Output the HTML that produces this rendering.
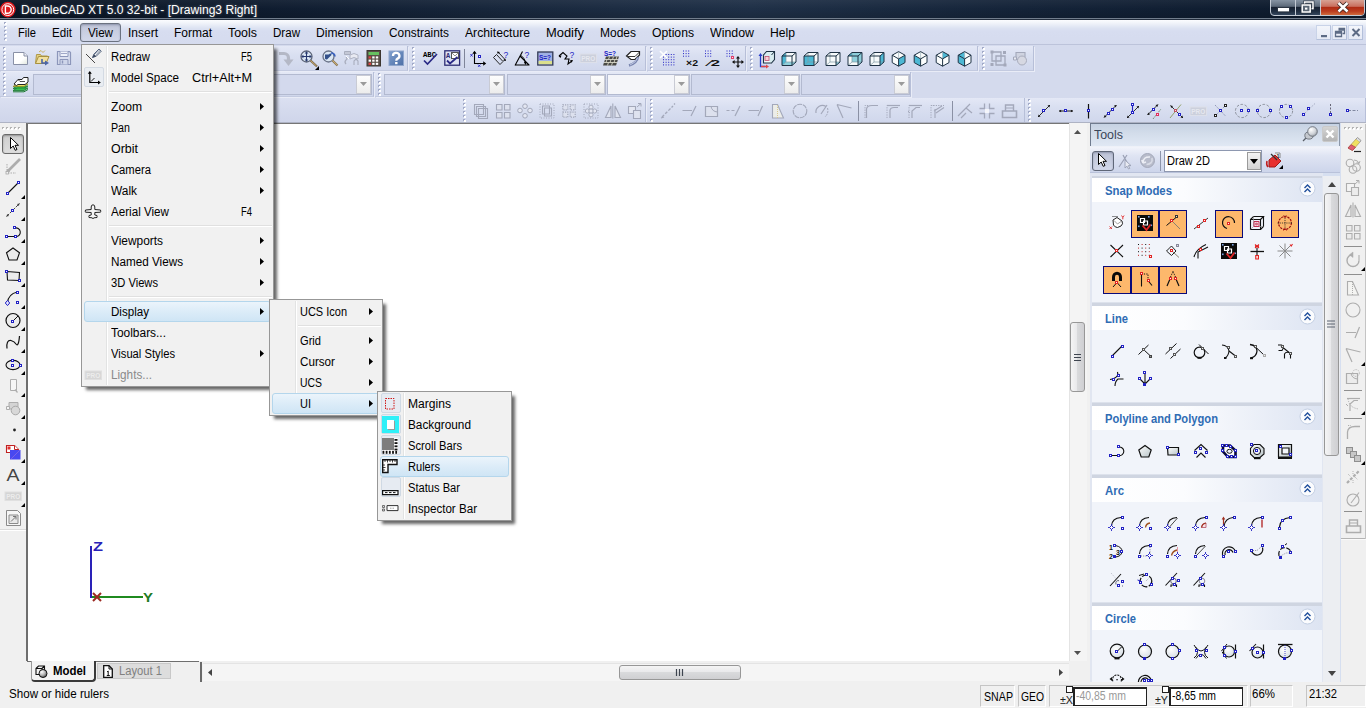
<!DOCTYPE html>
<html><head><meta charset="utf-8"><title>DoubleCAD XT 5.0 32-bit - [Drawing3 Right]</title>
<style>
html,body{margin:0;padding:0;}
body{width:1366px;height:708px;overflow:hidden;position:relative;background:#d4daed;font-family:"Liberation Sans",sans-serif;font-size:12px;}
div,span,svg{position:absolute;box-sizing:border-box;}
span{white-space:pre;transform-origin:0 50%;}
svg{overflow:visible;}
</style></head>
<body>
<div style="left:0px;top:0px;width:1366px;height:20px;background:linear-gradient(90deg,#0a1524 0%,#0e1b2e 18%,#1c2c42 45%,#1f3047 55%,#142338 75%,#0c192b 100%);"></div>
<div style="left:0px;top:0px;width:1366px;height:18px;background:linear-gradient(180deg,rgba(255,255,255,.05) 0%,rgba(255,255,255,0) 50%,rgba(0,0,0,.12) 100%);"></div>
<div style="left:0px;top:18px;width:1366px;height:1px;background:#717d8c;"></div>
<div style="left:0px;top:19px;width:1366px;height:1px;background:#222d3d;"></div>
<svg style="left:0px;top:1px;" width="18" height="18" viewBox="0 0 18 18"><circle cx="7.8" cy="8.6" r="7.8" fill="#de1a1e"/><circle cx="7.8" cy="8.6" r="5.9" fill="none" stroke="#fff" stroke-width="1"/><path d="M5.4 5 h2.2 a3.6 3.6 0 0 1 0 7.2 h-2.2 z" fill="none" stroke="#fff" stroke-width="1.4"/></svg>
<span style="left:21px;top:1.64px;line-height:16px;font-size:12px;color:#fff;transform:scaleX(1.0061);text-shadow:0 0 3px rgba(255,255,255,.35);">DoubleCAD XT 5.0 32-bit - [Drawing3 Right]</span>
<div style="left:1270px;top:-1px;width:95px;height:17px;border-radius:0 0 4px 4px;border:1px solid #c3cad4;background:linear-gradient(180deg,#8794a3 0%,#5d6a7a 42%,#172232 50%,#1f2d40 75%,#34465c 100%);"></div>
<div style="left:1295px;top:0px;width:1px;height:15px;background:#c3cad4;"></div>
<div style="left:1320px;top:0px;width:1px;height:15px;background:#c3cad4;"></div>
<div style="left:1321px;top:0px;width:43px;height:15px;border-radius:0 0 3px 0;background:linear-gradient(180deg,#d7a193 0%,#c9705f 42%,#b02c14 50%,#bb3d20 75%,#cf6a3c 100%);"></div>
<svg style="left:1277px;top:7px;" width="13" height="6" viewBox="0 0 13 6"><rect x="0.5" y="0.5" width="12" height="4.4" fill="#fff" stroke="#2a3442" stroke-width="1"/></svg>
<svg style="left:1301px;top:1px;" width="14" height="12" viewBox="0 0 14 12"><rect x="3.6" y="1" width="8.4" height="6.6" fill="none" stroke="#28323f" stroke-width="2.8"/><rect x="3.6" y="1" width="8.4" height="6.6" fill="none" stroke="#fff" stroke-width="1.5"/><rect x="1.2" y="4" width="8" height="7" fill="#46525f" stroke="#28323f" stroke-width="2.8"/><rect x="1.2" y="4" width="8" height="7" fill="#5a6673" stroke="#fff" stroke-width="1.5"/><rect x="4" y="6.6" width="2.4" height="2" fill="#fff"/></svg>
<svg style="left:1337px;top:2px;" width="12" height="10" viewBox="0 0 12 10"><path d="M1.5 1 L10.5 9.5 M10.5 1 L1.5 9.5" stroke="#3a2420" stroke-width="4.2" /><path d="M1.5 1 L10.5 9.5 M10.5 1 L1.5 9.5" stroke="#fff" stroke-width="2.5"/></svg>
<div style="left:0px;top:20px;width:1366px;height:25px;background:linear-gradient(180deg,#fbfcfe 0%,#f1f4fa 3px,#dde3f2 8px,#d7ddf0 11px,#d5dbee 100%);"></div>
<div style="left:0px;top:44px;width:1366px;height:1px;background:#bcc3da;"></div>
<svg style="left:4px;top:22px;" width="3" height="21" viewBox="0 0 3 21"><rect x="0" y="0" width="2" height="2" fill="#a3abc8"/><rect x="1" y="1" width="2" height="2" fill="#ffffff"/><rect x="0" y="4" width="2" height="2" fill="#a3abc8"/><rect x="1" y="5" width="2" height="2" fill="#ffffff"/><rect x="0" y="8" width="2" height="2" fill="#a3abc8"/><rect x="1" y="9" width="2" height="2" fill="#ffffff"/><rect x="0" y="12" width="2" height="2" fill="#a3abc8"/><rect x="1" y="13" width="2" height="2" fill="#ffffff"/><rect x="0" y="16" width="2" height="2" fill="#a3abc8"/><rect x="1" y="17" width="2" height="2" fill="#ffffff"/></svg>
<div style="left:80px;top:23px;width:41px;height:19px;border:1px solid #6b7280;border-radius:3px;background:linear-gradient(180deg,#b9bfd3 0%,#c6ccdf 30%,#d2d8ea 100%);box-shadow:inset 0 1px 2px rgba(60,70,100,.35);"></div>
<span style="left:18px;top:24.84px;line-height:16px;font-size:12px;color:#000;transform:scaleX(0.9305);">File</span>
<span style="left:52px;top:24.84px;line-height:16px;font-size:12px;color:#000;transform:scaleX(0.9668);">Edit</span>
<span style="left:88px;top:24.84px;line-height:16px;font-size:12px;color:#000;transform:scaleX(0.9691);">View</span>
<span style="left:128px;top:24.84px;line-height:16px;font-size:12px;color:#000;transform:scaleX(0.9995);">Insert</span>
<span style="left:174px;top:24.84px;line-height:16px;font-size:12px;color:#000;transform:scaleX(0.9996);">Format</span>
<span style="left:228px;top:24.84px;line-height:16px;font-size:12px;color:#000;transform:scaleX(1.0351);">Tools</span>
<span style="left:273px;top:24.84px;line-height:16px;font-size:12px;color:#000;transform:scaleX(0.9637);">Draw</span>
<span style="left:316px;top:24.84px;line-height:16px;font-size:12px;color:#000;transform:scaleX(1.0052);">Dimension</span>
<span style="left:389px;top:24.84px;line-height:16px;font-size:12px;color:#000;transform:scaleX(0.9884);">Constraints</span>
<span style="left:465px;top:24.84px;line-height:16px;font-size:12px;color:#000;transform:scaleX(1.0151);">Architecture</span>
<span style="left:546px;top:24.84px;line-height:16px;font-size:12px;color:#000;transform:scaleX(1.0752);">Modify</span>
<span style="left:600px;top:24.84px;line-height:16px;font-size:12px;color:#000;transform:scaleX(0.9991);">Modes</span>
<span style="left:652px;top:24.84px;line-height:16px;font-size:12px;color:#000;transform:scaleX(1.0155);">Options</span>
<span style="left:710px;top:24.84px;line-height:16px;font-size:12px;color:#000;transform:scaleX(1.0307);">Window</span>
<span style="left:770px;top:24.84px;line-height:16px;font-size:12px;color:#000;transform:scaleX(1.0127);">Help</span>
<div style="left:1316px;top:25px;width:15px;height:15px;border:1px solid #b4c0da;border-top-color:#c9d3e8;border-left-color:#c9d3e8;background:linear-gradient(180deg,#f3f5fb,#e6eaf5);"></div>
<div style="left:1332px;top:25px;width:15px;height:15px;border:1px solid #b4c0da;border-top-color:#c9d3e8;border-left-color:#c9d3e8;background:linear-gradient(180deg,#f3f5fb,#e6eaf5);"></div>
<div style="left:1348px;top:25px;width:15px;height:15px;border:1px solid #b4c0da;border-top-color:#c9d3e8;border-left-color:#c9d3e8;background:linear-gradient(180deg,#f3f5fb,#e6eaf5);"></div>
<svg style="left:1316px;top:25px;" width="16" height="15" viewBox="0 0 16 15"><rect x="5" y="10" width="6" height="2.2" fill="#5d6b85"/></svg>
<svg style="left:1332px;top:25px;" width="16" height="15" viewBox="0 0 16 15"><path d="M6.5 3.5 h6 v5 h-2 M6.5 5 h6" fill="none" stroke="#5d6b85" stroke-width="1.3"/><path d="M3.5 6.5 h6 v5 h-6 z M3.5 8 h6" fill="none" stroke="#5d6b85" stroke-width="1.3"/></svg>
<svg style="left:1348px;top:25px;" width="16" height="15" viewBox="0 0 16 15"><path d="M4.5 4 L11.5 11 M11.5 4 L4.5 11" stroke="#5d6b85" stroke-width="2"/></svg>
<div style="left:0px;top:46px;width:408px;height:25px;border-right:1px solid #b7bfd8;border-bottom:1px solid #c3cae0;box-shadow:1px 1px 0 #e9ecf7;background:linear-gradient(180deg,#e4e8f6 0%,#dae0f1 35%,#d0d7ec 100%);"></div>
<svg style="left:3px;top:47px;" width="3" height="24" viewBox="0 0 3 24"><rect x="0" y="0" width="2" height="2" fill="#a3abc8"/><rect x="1" y="1" width="2" height="2" fill="#ffffff"/><rect x="0" y="4" width="2" height="2" fill="#a3abc8"/><rect x="1" y="5" width="2" height="2" fill="#ffffff"/><rect x="0" y="8" width="2" height="2" fill="#a3abc8"/><rect x="1" y="9" width="2" height="2" fill="#ffffff"/><rect x="0" y="12" width="2" height="2" fill="#a3abc8"/><rect x="1" y="13" width="2" height="2" fill="#ffffff"/><rect x="0" y="16" width="2" height="2" fill="#a3abc8"/><rect x="1" y="17" width="2" height="2" fill="#ffffff"/><rect x="0" y="20" width="2" height="2" fill="#a3abc8"/><rect x="1" y="21" width="2" height="2" fill="#ffffff"/></svg>
<div style="left:409px;top:46px;width:237px;height:25px;border-right:1px solid #b7bfd8;border-bottom:1px solid #c3cae0;box-shadow:1px 1px 0 #e9ecf7;background:linear-gradient(180deg,#e4e8f6 0%,#dae0f1 35%,#d0d7ec 100%);"></div>
<svg style="left:412px;top:47px;" width="3" height="24" viewBox="0 0 3 24"><rect x="0" y="0" width="2" height="2" fill="#a3abc8"/><rect x="1" y="1" width="2" height="2" fill="#ffffff"/><rect x="0" y="4" width="2" height="2" fill="#a3abc8"/><rect x="1" y="5" width="2" height="2" fill="#ffffff"/><rect x="0" y="8" width="2" height="2" fill="#a3abc8"/><rect x="1" y="9" width="2" height="2" fill="#ffffff"/><rect x="0" y="12" width="2" height="2" fill="#a3abc8"/><rect x="1" y="13" width="2" height="2" fill="#ffffff"/><rect x="0" y="16" width="2" height="2" fill="#a3abc8"/><rect x="1" y="17" width="2" height="2" fill="#ffffff"/><rect x="0" y="20" width="2" height="2" fill="#a3abc8"/><rect x="1" y="21" width="2" height="2" fill="#ffffff"/></svg>
<div style="left:647px;top:46px;width:99px;height:25px;border-right:1px solid #b7bfd8;border-bottom:1px solid #c3cae0;box-shadow:1px 1px 0 #e9ecf7;background:linear-gradient(180deg,#e4e8f6 0%,#dae0f1 35%,#d0d7ec 100%);"></div>
<svg style="left:650px;top:47px;" width="3" height="24" viewBox="0 0 3 24"><rect x="0" y="0" width="2" height="2" fill="#a3abc8"/><rect x="1" y="1" width="2" height="2" fill="#ffffff"/><rect x="0" y="4" width="2" height="2" fill="#a3abc8"/><rect x="1" y="5" width="2" height="2" fill="#ffffff"/><rect x="0" y="8" width="2" height="2" fill="#a3abc8"/><rect x="1" y="9" width="2" height="2" fill="#ffffff"/><rect x="0" y="12" width="2" height="2" fill="#a3abc8"/><rect x="1" y="13" width="2" height="2" fill="#ffffff"/><rect x="0" y="16" width="2" height="2" fill="#a3abc8"/><rect x="1" y="17" width="2" height="2" fill="#ffffff"/><rect x="0" y="20" width="2" height="2" fill="#a3abc8"/><rect x="1" y="21" width="2" height="2" fill="#ffffff"/></svg>
<div style="left:747px;top:46px;width:231px;height:25px;border-right:1px solid #b7bfd8;border-bottom:1px solid #c3cae0;box-shadow:1px 1px 0 #e9ecf7;background:linear-gradient(180deg,#e4e8f6 0%,#dae0f1 35%,#d0d7ec 100%);"></div>
<svg style="left:750px;top:47px;" width="3" height="24" viewBox="0 0 3 24"><rect x="0" y="0" width="2" height="2" fill="#a3abc8"/><rect x="1" y="1" width="2" height="2" fill="#ffffff"/><rect x="0" y="4" width="2" height="2" fill="#a3abc8"/><rect x="1" y="5" width="2" height="2" fill="#ffffff"/><rect x="0" y="8" width="2" height="2" fill="#a3abc8"/><rect x="1" y="9" width="2" height="2" fill="#ffffff"/><rect x="0" y="12" width="2" height="2" fill="#a3abc8"/><rect x="1" y="13" width="2" height="2" fill="#ffffff"/><rect x="0" y="16" width="2" height="2" fill="#a3abc8"/><rect x="1" y="17" width="2" height="2" fill="#ffffff"/><rect x="0" y="20" width="2" height="2" fill="#a3abc8"/><rect x="1" y="21" width="2" height="2" fill="#ffffff"/></svg>
<div style="left:979px;top:46px;width:55px;height:25px;border-right:1px solid #b7bfd8;border-bottom:1px solid #c3cae0;box-shadow:1px 1px 0 #e9ecf7;background:linear-gradient(180deg,#e4e8f6 0%,#dae0f1 35%,#d0d7ec 100%);"></div>
<svg style="left:982px;top:47px;" width="3" height="24" viewBox="0 0 3 24"><rect x="0" y="0" width="2" height="2" fill="#a3abc8"/><rect x="1" y="1" width="2" height="2" fill="#ffffff"/><rect x="0" y="4" width="2" height="2" fill="#a3abc8"/><rect x="1" y="5" width="2" height="2" fill="#ffffff"/><rect x="0" y="8" width="2" height="2" fill="#a3abc8"/><rect x="1" y="9" width="2" height="2" fill="#ffffff"/><rect x="0" y="12" width="2" height="2" fill="#a3abc8"/><rect x="1" y="13" width="2" height="2" fill="#ffffff"/><rect x="0" y="16" width="2" height="2" fill="#a3abc8"/><rect x="1" y="17" width="2" height="2" fill="#ffffff"/><rect x="0" y="20" width="2" height="2" fill="#a3abc8"/><rect x="1" y="21" width="2" height="2" fill="#ffffff"/></svg>
<div style="left:0px;top:72px;width:374px;height:25px;border-right:1px solid #b7bfd8;border-bottom:1px solid #c3cae0;box-shadow:1px 1px 0 #e9ecf7;background:linear-gradient(180deg,#e4e8f6 0%,#dae0f1 35%,#d0d7ec 100%);"></div>
<svg style="left:3px;top:73px;" width="3" height="24" viewBox="0 0 3 24"><rect x="0" y="0" width="2" height="2" fill="#a3abc8"/><rect x="1" y="1" width="2" height="2" fill="#ffffff"/><rect x="0" y="4" width="2" height="2" fill="#a3abc8"/><rect x="1" y="5" width="2" height="2" fill="#ffffff"/><rect x="0" y="8" width="2" height="2" fill="#a3abc8"/><rect x="1" y="9" width="2" height="2" fill="#ffffff"/><rect x="0" y="12" width="2" height="2" fill="#a3abc8"/><rect x="1" y="13" width="2" height="2" fill="#ffffff"/><rect x="0" y="16" width="2" height="2" fill="#a3abc8"/><rect x="1" y="17" width="2" height="2" fill="#ffffff"/><rect x="0" y="20" width="2" height="2" fill="#a3abc8"/><rect x="1" y="21" width="2" height="2" fill="#ffffff"/></svg>
<div style="left:375px;top:72px;width:536px;height:25px;border-right:1px solid #b7bfd8;border-bottom:1px solid #c3cae0;box-shadow:1px 1px 0 #e9ecf7;background:linear-gradient(180deg,#e4e8f6 0%,#dae0f1 35%,#d0d7ec 100%);"></div>
<svg style="left:378px;top:73px;" width="3" height="24" viewBox="0 0 3 24"><rect x="0" y="0" width="2" height="2" fill="#a3abc8"/><rect x="1" y="1" width="2" height="2" fill="#ffffff"/><rect x="0" y="4" width="2" height="2" fill="#a3abc8"/><rect x="1" y="5" width="2" height="2" fill="#ffffff"/><rect x="0" y="8" width="2" height="2" fill="#a3abc8"/><rect x="1" y="9" width="2" height="2" fill="#ffffff"/><rect x="0" y="12" width="2" height="2" fill="#a3abc8"/><rect x="1" y="13" width="2" height="2" fill="#ffffff"/><rect x="0" y="16" width="2" height="2" fill="#a3abc8"/><rect x="1" y="17" width="2" height="2" fill="#ffffff"/><rect x="0" y="20" width="2" height="2" fill="#a3abc8"/><rect x="1" y="21" width="2" height="2" fill="#ffffff"/></svg>
<div style="left:0px;top:98px;width:1366px;height:25px;background:linear-gradient(180deg,#dbe0f1 0%,#d4daed 50%,#cfd5ea 100%);"></div>
<div style="left:460px;top:98px;width:186px;height:25px;border-right:1px solid #b7bfd8;border-bottom:1px solid #c3cae0;box-shadow:1px 1px 0 #e9ecf7;background:linear-gradient(180deg,#e4e8f6 0%,#dae0f1 35%,#d0d7ec 100%);"></div>
<svg style="left:463px;top:99px;" width="3" height="24" viewBox="0 0 3 24"><rect x="0" y="0" width="2" height="2" fill="#a3abc8"/><rect x="1" y="1" width="2" height="2" fill="#ffffff"/><rect x="0" y="4" width="2" height="2" fill="#a3abc8"/><rect x="1" y="5" width="2" height="2" fill="#ffffff"/><rect x="0" y="8" width="2" height="2" fill="#a3abc8"/><rect x="1" y="9" width="2" height="2" fill="#ffffff"/><rect x="0" y="12" width="2" height="2" fill="#a3abc8"/><rect x="1" y="13" width="2" height="2" fill="#ffffff"/><rect x="0" y="16" width="2" height="2" fill="#a3abc8"/><rect x="1" y="17" width="2" height="2" fill="#ffffff"/><rect x="0" y="20" width="2" height="2" fill="#a3abc8"/><rect x="1" y="21" width="2" height="2" fill="#ffffff"/></svg>
<div style="left:647px;top:98px;width:378px;height:25px;border-right:1px solid #b7bfd8;border-bottom:1px solid #c3cae0;box-shadow:1px 1px 0 #e9ecf7;background:linear-gradient(180deg,#e4e8f6 0%,#dae0f1 35%,#d0d7ec 100%);"></div>
<svg style="left:650px;top:99px;" width="3" height="24" viewBox="0 0 3 24"><rect x="0" y="0" width="2" height="2" fill="#a3abc8"/><rect x="1" y="1" width="2" height="2" fill="#ffffff"/><rect x="0" y="4" width="2" height="2" fill="#a3abc8"/><rect x="1" y="5" width="2" height="2" fill="#ffffff"/><rect x="0" y="8" width="2" height="2" fill="#a3abc8"/><rect x="1" y="9" width="2" height="2" fill="#ffffff"/><rect x="0" y="12" width="2" height="2" fill="#a3abc8"/><rect x="1" y="13" width="2" height="2" fill="#ffffff"/><rect x="0" y="16" width="2" height="2" fill="#a3abc8"/><rect x="1" y="17" width="2" height="2" fill="#ffffff"/><rect x="0" y="20" width="2" height="2" fill="#a3abc8"/><rect x="1" y="21" width="2" height="2" fill="#ffffff"/></svg>
<div style="left:1025px;top:98px;width:341px;height:25px;border-right:1px solid #b7bfd8;border-bottom:1px solid #c3cae0;box-shadow:1px 1px 0 #e9ecf7;background:linear-gradient(180deg,#e4e8f6 0%,#dae0f1 35%,#d0d7ec 100%);"></div>
<svg style="left:1028px;top:99px;" width="3" height="24" viewBox="0 0 3 24"><rect x="0" y="0" width="2" height="2" fill="#a3abc8"/><rect x="1" y="1" width="2" height="2" fill="#ffffff"/><rect x="0" y="4" width="2" height="2" fill="#a3abc8"/><rect x="1" y="5" width="2" height="2" fill="#ffffff"/><rect x="0" y="8" width="2" height="2" fill="#a3abc8"/><rect x="1" y="9" width="2" height="2" fill="#ffffff"/><rect x="0" y="12" width="2" height="2" fill="#a3abc8"/><rect x="1" y="13" width="2" height="2" fill="#ffffff"/><rect x="0" y="16" width="2" height="2" fill="#a3abc8"/><rect x="1" y="17" width="2" height="2" fill="#ffffff"/><rect x="0" y="20" width="2" height="2" fill="#a3abc8"/><rect x="1" y="21" width="2" height="2" fill="#ffffff"/></svg>
<div style="left:33px;top:74px;width:339px;height:21px;border:1px solid #b3bad0;background:#d3d9ed;"></div>
<div style="left:356px;top:75px;width:15px;height:19px;border:1px solid #c9cbd4;background:linear-gradient(180deg,#fdfdfd,#ececec);"></div>
<svg style="left:360px;top:82px;" width="7" height="4" viewBox="0 0 7 4"><path d="M0 0 h7 l-3.5 4 z" fill="#9a9a9a"/></svg>
<div style="left:384px;top:74px;width:121px;height:21px;border:1px solid #b3bad0;background:#d3d9ed;"></div>
<div style="left:489px;top:75px;width:15px;height:19px;border:1px solid #c9cbd4;background:linear-gradient(180deg,#fdfdfd,#ececec);"></div>
<svg style="left:493px;top:82px;" width="7" height="4" viewBox="0 0 7 4"><path d="M0 0 h7 l-3.5 4 z" fill="#9a9a9a"/></svg>
<div style="left:507px;top:74px;width:99px;height:21px;border:1px solid #b3bad0;background:#d3d9ed;"></div>
<div style="left:590px;top:75px;width:15px;height:19px;border:1px solid #c9cbd4;background:linear-gradient(180deg,#fdfdfd,#ececec);"></div>
<svg style="left:594px;top:82px;" width="7" height="4" viewBox="0 0 7 4"><path d="M0 0 h7 l-3.5 4 z" fill="#9a9a9a"/></svg>
<div style="left:607px;top:74px;width:83px;height:21px;border:1px solid #b3bad0;background:#f4f5f9;"></div>
<div style="left:674px;top:75px;width:15px;height:19px;border:1px solid #c9cbd4;background:linear-gradient(180deg,#fdfdfd,#ececec);"></div>
<svg style="left:678px;top:82px;" width="7" height="4" viewBox="0 0 7 4"><path d="M0 0 h7 l-3.5 4 z" fill="#9a9a9a"/></svg>
<div style="left:691px;top:74px;width:109px;height:21px;border:1px solid #b3bad0;background:#d3d9ed;"></div>
<div style="left:784px;top:75px;width:15px;height:19px;border:1px solid #c9cbd4;background:linear-gradient(180deg,#fdfdfd,#ececec);"></div>
<svg style="left:788px;top:82px;" width="7" height="4" viewBox="0 0 7 4"><path d="M0 0 h7 l-3.5 4 z" fill="#9a9a9a"/></svg>
<div style="left:801px;top:74px;width:109px;height:21px;border:1px solid #b3bad0;background:#d3d9ed;"></div>
<div style="left:894px;top:75px;width:15px;height:19px;border:1px solid #c9cbd4;background:linear-gradient(180deg,#fdfdfd,#ececec);"></div>
<svg style="left:898px;top:82px;" width="7" height="4" viewBox="0 0 7 4"><path d="M0 0 h7 l-3.5 4 z" fill="#9a9a9a"/></svg>
<div style="left:0px;top:123px;width:27px;height:560px;background:#f0f0f0;"></div>
<svg style="left:2px;top:127px;" width="23" height="3" viewBox="0 0 23 3"><rect y="0" x="0" width="2" height="2" fill="#b4b4b4"/><rect y="1" x="1" width="2" height="2" fill="#fff"/><rect y="0" x="4" width="2" height="2" fill="#b4b4b4"/><rect y="1" x="5" width="2" height="2" fill="#fff"/><rect y="0" x="8" width="2" height="2" fill="#b4b4b4"/><rect y="1" x="9" width="2" height="2" fill="#fff"/><rect y="0" x="12" width="2" height="2" fill="#b4b4b4"/><rect y="1" x="13" width="2" height="2" fill="#fff"/><rect y="0" x="16" width="2" height="2" fill="#b4b4b4"/><rect y="1" x="17" width="2" height="2" fill="#fff"/></svg>
<div style="left:0px;top:122px;width:1366px;height:1px;background:#aeb3c4;"></div>
<div style="left:26px;top:123px;width:1043px;height:539px;background:#fff;border-left:2px solid #6e6e6e;border-top:1px solid #767676;"></div>
<div style="left:90px;top:546px;width:2px;height:52px;background:#2a22b8;"></div>
<div style="left:92px;top:596px;width:51px;height:2px;background:#1f8a1f;"></div>
<svg style="left:92px;top:592px;" width="10" height="10" viewBox="0 0 10 10"><path d="M1 1 L9 9 M9 1 L1 9" stroke="#9c2a22" stroke-width="2"/></svg>
<span style="left:93px;top:537.50px;line-height:17px;font-size:13px;color:#2a22b8;font-weight:bold;transform:scaleX(1.2574);">Z</span>
<span style="left:143px;top:589.00px;line-height:17px;font-size:13px;color:#1f7a1f;font-weight:bold;transform:scaleX(1.1532);">Y</span>
<div style="left:1069px;top:123px;width:18px;height:539px;background:#f4f4f4;border-left:1px solid #e4e4e4;"></div>
<svg style="left:1074px;top:130px;" width="7" height="4" viewBox="0 0 7 4"><path d="M0 4 h7 l-3.5 -4 z" fill="#505050"/></svg>
<svg style="left:1074px;top:651px;" width="7" height="4" viewBox="0 0 7 4"><path d="M0 0 h7 l-3.5 4 z" fill="#505050"/></svg>
<div style="left:1070px;top:322px;width:15px;height:70px;border:1px solid #979797;border-radius:3px;background:linear-gradient(90deg,#f5f5f5 0%,#e9e9eb 45%,#d9dadc 50%,#cfcfd2 100%);"></div>
<svg style="left:1074px;top:353px;" width="8" height="9" viewBox="0 0 8 9"><path d="M0 1.5 h7 M0 4.5 h7 M0 7.5 h7" stroke="#3f4550" stroke-width="1.2"/></svg>
<div style="left:1087px;top:123px;width:3px;height:560px;background:#f0f0f0;"></div>
<div style="left:0px;top:661px;width:1090px;height:22px;background:#f0f0f0;"></div>
<div style="left:27px;top:661px;width:172px;height:1px;background:#6e6e6e;"></div>
<div style="left:31px;top:661px;width:65px;height:21px;background:#f4f4f4;border:1px solid #9a9a9a;border-top:none;border-radius:0 0 4px 4px;border-right:2px solid #3a3a3a;border-bottom:2px solid #3a3a3a;"></div>
<svg style="left:35px;top:665px;" width="13" height="13" viewBox="0 0 13 13"><defs><radialGradient id="gsp" cx=".35" cy=".3" r=".8"><stop offset="0" stop-color="#fff"/><stop offset=".5" stop-color="#b8b8b8"/><stop offset="1" stop-color="#444"/></radialGradient></defs><path d="M1 3.5 L3.5 1 H9.5 V7 L7 9.5 H1 Z M1 3.5 H7 V9.5 M7 3.5 L9.5 1" fill="#f4f4f4" stroke="#111" stroke-width="1.1"/><circle cx="8" cy="8.5" r="4" fill="url(#gsp)" stroke="#111" stroke-width="1"/></svg>
<span style="left:52.5px;top:662.84px;line-height:16px;font-size:12px;color:#000;font-weight:bold;transform:scaleX(0.9518);">Model</span>
<div style="left:97px;top:663px;width:74px;height:16px;background:#dddddd;border:1px solid #c8c8c8;"></div>
<svg style="left:103px;top:665px;" width="10" height="13" viewBox="0 0 10 13"><path d="M0.7 0.7 H6 L9.3 4 V12.3 H0.7 Z" fill="#fff" stroke="#111" stroke-width="1.3"/><path d="M6 0.7 V4 H9.3" fill="none" stroke="#111" stroke-width="1"/><path d="M4 7 L5.2 6 V10.5 M3.8 10.5 h3" fill="none" stroke="#111" stroke-width="1"/></svg>
<span style="left:118.5px;top:662.84px;line-height:16px;font-size:12px;color:#808080;transform:scaleX(0.9338);">Layout 1</span>
<div style="left:203px;top:663px;width:866px;height:18px;background:#f5f5f5;border-top:1px solid #e4e4e4;"></div>
<div style="left:200px;top:662px;width:2px;height:20px;background:#6a6a6a;"></div>
<svg style="left:208px;top:669px;" width="4" height="7" viewBox="0 0 4 7"><path d="M4 0 v7 l-4 -3.5 z" fill="#444"/></svg>
<svg style="left:1059px;top:669px;" width="4" height="7" viewBox="0 0 4 7"><path d="M0 0 v7 l4 -3.5 z" fill="#444"/></svg>
<div style="left:619px;top:665px;width:122px;height:15px;border:1px solid #979797;border-radius:3px;background:linear-gradient(180deg,#f5f5f5 0%,#e9e9eb 45%,#d9dadc 50%,#cfcfd2 100%);"></div>
<svg style="left:675px;top:669px;" width="9" height="8" viewBox="0 0 9 8"><path d="M1.5 0 v7 M4.5 0 v7 M7.5 0 v7" stroke="#3f4550" stroke-width="1.2"/></svg>
<div style="left:1341px;top:123px;width:25px;height:560px;background:#f0f0f0;"></div>
<svg style="left:1344px;top:127px;" width="20" height="3" viewBox="0 0 20 3"><rect y="0" x="0" width="2" height="2" fill="#b4b4b4"/><rect y="1" x="1" width="2" height="2" fill="#fff"/><rect y="0" x="4" width="2" height="2" fill="#b4b4b4"/><rect y="1" x="5" width="2" height="2" fill="#fff"/><rect y="0" x="8" width="2" height="2" fill="#b4b4b4"/><rect y="1" x="9" width="2" height="2" fill="#fff"/><rect y="0" x="12" width="2" height="2" fill="#b4b4b4"/><rect y="1" x="13" width="2" height="2" fill="#fff"/><rect y="0" x="16" width="2" height="2" fill="#b4b4b4"/><rect y="1" x="17" width="2" height="2" fill="#fff"/></svg>
<svg style="left:12px;top:50px;" width="16" height="16" viewBox="0 0 16 16"><defs><linearGradient id="gpg" x1="0" y1="0" x2="1" y2="1"><stop offset="0" stop-color="#fff"/><stop offset=".6" stop-color="#fff"/><stop offset="1" stop-color="#dfe6dc"/></linearGradient></defs><path d="M1.5 2.5 h10.5 l3.5 3.5 v8.5 h-14 z" fill="url(#gpg)" stroke="#8990a6" stroke-width="1" /><path d="M12 2.5 v3.5 h3.5" fill="#eef0f6" stroke="#8990a6" stroke-width="1" /></svg>
<svg style="left:34px;top:50px;" width="16" height="16" viewBox="0 0 16 16"><path d="M1.5 13.5 l1 -9 h4 l1 1.5 h6 v2" fill="#e4cf80" stroke="#b09a48" stroke-width="1" /><path d="M1.5 13.5 l3 -7 h10.5 l-3 7 z" fill="#f0dfa0" stroke="#a8923f" stroke-width="1" /><path d="M8 9 v4 h4" fill="none" stroke="#4a64a8" stroke-width="1.6" /><path d="M11 10.5 l4 2.5 l-4 2.5 z" fill="#4a64a8"/><path d="M5 2 l2 -1.5 l2 2 l2 -2" fill="none" stroke="#c8b060" stroke-width="1" /></svg>
<svg style="left:56px;top:50px;" width="16" height="16" viewBox="0 0 16 16"><path d="M1.5 1.5 h12 l1 1 v12 h-13 z" fill="#d9deef" stroke="#8c96ba" stroke-width="1.2" /><path d="M4 1.5 v5 h8 v-5" fill="#eef1fa" stroke="#8c96ba" stroke-width="1" /><path d="M5 3.5 h6" fill="none" stroke="#a0a8c8" stroke-width="1" /><path d="M4 14.5 v-5 h8 v5" fill="#cfd6ea" stroke="#8c96ba" stroke-width="1" /><path d="M6.5 10.5 v3" fill="none" stroke="#8c96ba" stroke-width="1.4" /></svg>
<svg style="left:278px;top:50px;" width="16" height="16" viewBox="0 0 16 16"><path d="M1 3.5 h5 a4.5 4.5 0 0 1 4.5 4.5 v2" fill="none" stroke="#b4b8c6" stroke-width="3.2" /><path d="M5.5 9.5 h10 l-5 6.5 z" fill="#b4b8c6"/></svg>
<svg style="left:300px;top:50px;" width="19" height="19" viewBox="0 0 19 19"><circle cx="6.5" cy="6.5" r="5.5" fill="#dbe7f3" stroke="#5b6478" stroke-width="1.3"/><path d="M10.5 10.5 L17 16.5" fill="none" stroke="#7a6a50" stroke-width="2.2" /><path d="M10.5 10.5 L16.5 16" fill="none" stroke="#c8a868" stroke-width="1" /><path d="M6.5 2 v9 M2 6.5 h9" fill="none" stroke="#26386e" stroke-width="1.1" /><path d="M6.5 1.2 l-1.8 2.2 h3.6 z M6.5 11.8 l-1.8 -2.2 h3.6 z M1.2 6.5 l2.2 -1.8 v3.6 z M11.8 6.5 l-2.2 -1.8 v3.6 z" fill="#26386e"/></svg>
<svg style="left:315px;top:66px;" width="4" height="4" viewBox="0 0 4 4"><path d="M4 0 v4 h-4 z" fill="#000"/></svg>
<svg style="left:322px;top:50px;" width="17" height="17" viewBox="0 0 17 17"><circle cx="6.5" cy="6.5" r="5.5" fill="#dbe7f3" stroke="#6a7388" stroke-width="1.3"/><path d="M10.5 10.5 L15.5 15.5" fill="none" stroke="#8a7858" stroke-width="2.2" /><path d="M10.5 10.5 L15.2 15" fill="none" stroke="#d0b070" stroke-width="1" /><path d="M4 9 L9 4" fill="none" stroke="#33508a" stroke-width="2.2" /><path d="M3 4.5 h5 v5 z" fill="#33508a" transform="rotate(-90 5.5 7) translate(0,0)"/><path d="M9 3 a4 4 0 0 1 4 3.5" fill="none" stroke="#3a62c0" stroke-width="1.6" /></svg>
<svg style="left:343px;top:50px;" width="16" height="16" viewBox="0 0 16 16"><path d="M1.5 1.5 h6 v3 h-6 z" fill="#c4c8d6" stroke="#a9aebe" stroke-width="1" /><path d="M7 5 q4 -3 8 0 v4 q-4 -3 -8 0 z" fill="#e8eaf2" stroke="#b0b4c4" stroke-width="1" /><path d="M3 7 q2 2 0 3 q-2 2 0 4" fill="none" stroke="#a9aebe" stroke-width="1.2" /><path d="M11 15 v-4 l2 -2 l2 2 v4" fill="none" stroke="#a9aebe" stroke-width="1.1" /><path d="M3 6 l3 3" fill="none" stroke="#fff" stroke-width="1" /></svg>
<svg style="left:366px;top:50px;" width="16" height="16" viewBox="0 0 16 16"><rect x="1" y="0.5" width="13.5" height="15.5" fill="#5a5048" stroke="#3c3630" stroke-width="1"/><rect x="2.5" y="2" width="10.5" height="3" fill="#66c060"/><rect x="2.6" y="6.4" width="2.4" height="2.1" fill="#e04040"/><rect x="6.2" y="6.4" width="2.4" height="2.1" fill="#fff"/><rect x="9.8" y="6.4" width="2.4" height="2.1" fill="#fff"/><rect x="2.6" y="9.600000000000001" width="2.4" height="2.1" fill="#fff"/><rect x="6.2" y="9.600000000000001" width="2.4" height="2.1" fill="#fff"/><rect x="9.8" y="9.600000000000001" width="2.4" height="2.1" fill="#fff"/><rect x="2.6" y="12.8" width="2.4" height="2.1" fill="#e04040"/><rect x="6.2" y="12.8" width="2.4" height="2.1" fill="#fff"/><rect x="9.8" y="12.8" width="2.4" height="2.1" fill="#fff"/></svg>
<svg style="left:388px;top:50px;" width="16" height="16" viewBox="0 0 16 16"><defs><linearGradient id="ghl" x1="0" y1="0" x2="1" y2="1"><stop offset="0" stop-color="#7fa0cf"/><stop offset="1" stop-color="#4d6fa6"/></linearGradient></defs><rect x="1" y="1" width="14.5" height="14.5" fill="url(#ghl)" stroke="#8fa6cc" stroke-width="1"/><path d="M5 6 a3.2 3 0 1 1 4.6 2.6 q-1.3 .8 -1.3 2.2" fill="none" stroke="#fff" stroke-width="2.3" /><rect x="7.1" y="12" width="2.4" height="2.2" fill="#fff"/></svg>
<svg style="left:422px;top:50px;" width="16" height="16" viewBox="0 0 16 16"><text x="1" y="7" font-family="Liberation Mono" font-weight="bold" font-size="6.5" fill="#000" textLength="13" lengthAdjust="spacingAndGlyphs">ABC</text><path d="M2 10.5 l3.5 3.5 L15 4" fill="none" stroke="#2a2a86" stroke-width="1.7" /></svg>
<svg style="left:444px;top:50px;" width="16" height="16" viewBox="0 0 16 16"><rect x="0.8" y="0.8" width="14.8" height="14.4" fill="#dfe3f3" stroke="#2c2c74" stroke-width="1.3"/><rect x="7.5" y="2.5" width="7" height="6" fill="#fff" stroke="#555" stroke-width="1"/><path d="M8 3 l3 3 l3.5 -3.5" fill="none" stroke="#777" stroke-width="0.8" /><text x="2" y="8" font-family="Liberation Mono" font-weight="bold" font-size="7" fill="#2c2c74">A</text><path d="M3 10.5 l3 3 L13.5 7" fill="none" stroke="#2a2a86" stroke-width="1.8" /></svg>
<div style="left:464px;top:49px;width:1px;height:19px;background:#7f8599;"></div>
<svg style="left:470px;top:50px;" width="17" height="17" viewBox="0 0 17 17"><path d="M4.5 14 V2.5 M4.5 13.5 H15" fill="none" stroke="#000" stroke-width="1.1" /><path d="M4.5 0.8 l-2.2 3 h4.4 z M16.2 13.5 l-3 -2.2 v4.4 z" fill="#000"/><rect x="8.5" y="5.5" width="2" height="2" fill="#ffffff" stroke="#2222c4" stroke-width="1"/><path d="M0.5 4 l2 2.5 M2.5 4 l-2 2.5 M8 14.5 l2.4 2.4 M10.4 14.5 l-2.4 2.4" fill="none" stroke="#2222c4" stroke-width="0.9" /></svg>
<svg style="left:492px;top:50px;" width="16" height="16" viewBox="0 0 16 16"><path d="M1.5 7.5 L8 14.5 L11 11.5 L4.5 4.5 Z" fill="none" stroke="#111" stroke-width="0.9" /><path d="M6.5 2.5 L13 9.5" fill="none" stroke="#111" stroke-width="0.9" /><path d="M5 1.5 l3 .5 l-2.2 2 z M14 11 l-3 -.5 l2.2 -2 z" fill="#000"/><text x="11.5" y="7.5" font-family="Liberation Sans" font-size="8.5" fill="#2222c4">?</text></svg>
<svg style="left:514px;top:50px;" width="16" height="16" viewBox="0 0 16 16"><path d="M1 15.5 L8.5 1.5 M1 15 H15.5 M6 6 L15 15" fill="none" stroke="#000" stroke-width="1.1" /><path d="M7 5.5 q4 2 4.5 8" fill="none" stroke="#000" stroke-width="0.9" /><path d="M11.5 15 l-1.6 -3 h3 z" fill="#000"/><text x="10.5" y="8" font-family="Liberation Sans" font-size="8.5" fill="#2222c4">?</text></svg>
<svg style="left:537px;top:50px;" width="16" height="16" viewBox="0 0 16 16"><rect x="0.8" y="2" width="15" height="13" fill="#9fb0e4" stroke="#333a55" stroke-width="1.3"/><rect x="1.6" y="11" width="13.4" height="3.2" fill="#dbe08c"/><text x="2" y="10" font-family="Liberation Sans" font-weight="bold" font-size="7" fill="#2222c4" textLength="12" lengthAdjust="spacingAndGlyphs">S=?</text></svg>
<svg style="left:558px;top:50px;" width="16" height="16" viewBox="0 0 16 16"><path d="M1 6 L5 2.5 L9 6 L7 9 L11 9 L10 14 L14 11" fill="none" stroke="#000" stroke-width="1.1" /><path d="M0.5 6 l3 -.5 l-1 2.6 z M15 10 l-3 .3 l1.6 2.4 z" fill="#000"/><text x="11.5" y="8" font-family="Liberation Sans" font-size="8.5" fill="#2222c4">?</text></svg>
<svg style="left:580px;top:50px;" width="16" height="16" viewBox="0 0 16 16"><rect x="0" y="4" width="16.5" height="8.5" fill="#ccd0dc" stroke="#dde0ea" stroke-width="1"/><text x="1.2" y="11" font-family="Liberation Sans" font-weight="bold" font-size="7.5" fill="#e6e8f0" textLength="14" lengthAdjust="spacingAndGlyphs">PRO</text></svg>
<svg style="left:603px;top:50px;" width="16" height="16" viewBox="0 0 16 16"><text x="1" y="6" font-family="Liberation Sans" font-weight="bold" font-size="7" fill="#2222c4" textLength="12" lengthAdjust="spacingAndGlyphs">S=?</text><path d="M3 6.5 h13 l-3 9 h-13 z" fill="#4a4a46"/><path d="M2 9.5 h13 M1 12.5 h13 M6.5 6.5 l-1 3 M10.5 6.5 l-1 3 M14 6.5 l-1 3 M4 9.5 l-1 3 M8 9.5 l-1 3 M12 9.5 l-1 3 M5.5 12.5 l-1 3 M9.5 12.5 l-1 3" fill="none" stroke="#d8d8c8" stroke-width="0.9" /></svg>
<svg style="left:625px;top:50px;" width="16" height="16" viewBox="0 0 16 16"><path d="M1.5 6 L6 1.5 H14.5 V5 L10 9.5 H6 Z" fill="#fff" stroke="#222" stroke-width="1.2" /><path d="M14.5 2 L10 6.5 H3" fill="none" stroke="#222" stroke-width="0.9" /><path d="M13 7 Q12 13 4 15.5" fill="none" stroke="#7a86b0" stroke-width="2.4" /><path d="M12.5 8 Q11 12.5 5 15" fill="none" stroke="#c8d0e8" stroke-width="0.9" /></svg>
<svg style="left:659px;top:50px;" width="16" height="16" viewBox="0 0 16 16"><rect x="4.0" y="4.0" width="1" height="1" fill="#2222c4"/><rect x="4.0" y="6.6" width="1" height="1" fill="#2222c4"/><rect x="4.0" y="9.2" width="1" height="1" fill="#2222c4"/><rect x="4.0" y="11.8" width="1" height="1" fill="#2222c4"/><rect x="4.0" y="14.4" width="1" height="1" fill="#2222c4"/><rect x="6.6" y="4.0" width="1" height="1" fill="#2222c4"/><rect x="6.6" y="6.6" width="1" height="1" fill="#2222c4"/><rect x="6.6" y="9.2" width="1" height="1" fill="#2222c4"/><rect x="6.6" y="11.8" width="1" height="1" fill="#2222c4"/><rect x="6.6" y="14.4" width="1" height="1" fill="#2222c4"/><rect x="9.2" y="4.0" width="1" height="1" fill="#2222c4"/><rect x="9.2" y="6.6" width="1" height="1" fill="#2222c4"/><rect x="9.2" y="9.2" width="1" height="1" fill="#2222c4"/><rect x="9.2" y="11.8" width="1" height="1" fill="#2222c4"/><rect x="9.2" y="14.4" width="1" height="1" fill="#2222c4"/><rect x="11.8" y="4.0" width="1" height="1" fill="#2222c4"/><rect x="11.8" y="6.6" width="1" height="1" fill="#2222c4"/><rect x="11.8" y="9.2" width="1" height="1" fill="#2222c4"/><rect x="11.8" y="11.8" width="1" height="1" fill="#2222c4"/><rect x="11.8" y="14.4" width="1" height="1" fill="#2222c4"/><rect x="14.4" y="4.0" width="1" height="1" fill="#2222c4"/><rect x="14.4" y="6.6" width="1" height="1" fill="#2222c4"/><rect x="14.4" y="9.2" width="1" height="1" fill="#2222c4"/><rect x="14.4" y="11.8" width="1" height="1" fill="#2222c4"/><rect x="14.4" y="14.4" width="1" height="1" fill="#2222c4"/><path d="M1 1 L8 8 M8 1 L1 8" fill="none" stroke="#fff" stroke-width="1.6" /></svg>
<svg style="left:682px;top:50px;" width="16" height="16" viewBox="0 0 16 16"><rect x="1.0" y="0.5" width="1" height="1" fill="#2222c4"/><rect x="1.0" y="3.1" width="1" height="1" fill="#2222c4"/><rect x="1.0" y="5.7" width="1" height="1" fill="#2222c4"/><rect x="3.6" y="0.5" width="1" height="1" fill="#2222c4"/><rect x="3.6" y="3.1" width="1" height="1" fill="#2222c4"/><rect x="3.6" y="5.7" width="1" height="1" fill="#2222c4"/><rect x="6.2" y="0.5" width="1" height="1" fill="#2222c4"/><rect x="6.2" y="3.1" width="1" height="1" fill="#2222c4"/><rect x="6.2" y="5.7" width="1" height="1" fill="#2222c4"/><text x="4" y="16" font-family="Liberation Sans" font-weight="bold" font-size="9" fill="#111" textLength="12" lengthAdjust="spacingAndGlyphs">×2</text></svg>
<svg style="left:704px;top:50px;" width="16" height="16" viewBox="0 0 16 16"><rect x="1.0" y="0.5" width="1" height="1" fill="#2222c4"/><rect x="1.0" y="3.1" width="1" height="1" fill="#2222c4"/><rect x="1.0" y="5.7" width="1" height="1" fill="#2222c4"/><rect x="3.6" y="0.5" width="1" height="1" fill="#2222c4"/><rect x="3.6" y="3.1" width="1" height="1" fill="#2222c4"/><rect x="3.6" y="5.7" width="1" height="1" fill="#2222c4"/><rect x="6.2" y="0.5" width="1" height="1" fill="#2222c4"/><rect x="6.2" y="3.1" width="1" height="1" fill="#2222c4"/><rect x="6.2" y="5.7" width="1" height="1" fill="#2222c4"/><text x="4" y="16" font-family="Liberation Sans" font-weight="bold" font-size="9" fill="#111" textLength="12" lengthAdjust="spacingAndGlyphs">⁄2</text></svg>
<svg style="left:726px;top:50px;" width="18" height="18" viewBox="0 0 18 18"><rect x="0.5" y="0.5" width="1" height="1" fill="#2222c4"/><rect x="0.5" y="3.1" width="1" height="1" fill="#2222c4"/><rect x="0.5" y="5.7" width="1" height="1" fill="#2222c4"/><rect x="3.1" y="0.5" width="1" height="1" fill="#2222c4"/><rect x="3.1" y="3.1" width="1" height="1" fill="#2222c4"/><rect x="3.1" y="5.7" width="1" height="1" fill="#2222c4"/><rect x="5.7" y="0.5" width="1" height="1" fill="#2222c4"/><rect x="5.7" y="3.1" width="1" height="1" fill="#2222c4"/><rect x="5.7" y="5.7" width="1" height="1" fill="#2222c4"/><rect x="5.5" y="6.5" width="2" height="2" fill="#ffe0e8" stroke="#e0406a" stroke-width="1"/><path d="M12 7.5 v9 M7.5 12 h9" fill="none" stroke="#111" stroke-width="1.2" /><path d="M12 6 l-2 2.6 h4 z M12 18 l-2 -2.6 h4 z M6 12 l2.6 -2 v4 z M18 12 l-2.6 -2 v4 z" fill="#111"/></svg>
<svg style="left:758px;top:50px;" width="18" height="18" viewBox="0 0 18 18"><path d="M5.5 5 h8 v8 h-8 z" fill="#f4f8fa" stroke="#1e3244" stroke-width="1.1" /><path d="M5.5 5 l3 -3.5 h8 v8 l-3 3.5" fill="#d8ecf0" stroke="#1e3244" stroke-width="1.1" /><path d="M13.5 5 l3 -3.5" fill="none" stroke="#1e3244" stroke-width="1" /><rect x="7" y="6.5" width="4" height="4" fill="#f8d0d8" stroke="#c05070" stroke-width=".8"/><path d="M2.5 5 v11.5 h5" fill="none" stroke="#283cc8" stroke-width="1.3" /><path d="M2.5 3 l-2 3 h4 z" fill="#283cc8"/><path d="M3 16.5 h6" fill="none" stroke="#e04848" stroke-width="1.3" /><path d="M11 16.5 l-3 -2 v4 z" fill="#e04848"/></svg>
<svg style="left:780px;top:50px;" width="17" height="17" viewBox="0 0 17 17"><path d="M2 6 L6 2.5 H16 V12 L12 15.5 H2 Z" fill="#f6fafb"/><path d="M2 6 l4 -3.5 v9.5 l-4 3.5 z" fill="#4db8d4"/><path d="M2 15.5 l4 -3.5 h10 l-4 3.5 z" fill="#8fd0dc"/><path d="M6 2.5 v9.5 h10 M6 12 l-4 3.5" fill="none" stroke="#7f98a4" stroke-width="0.7" /><path d="M2 6 h10 v9.5 h-10 z M2 6 l4 -3.5 h10 l-4 3.5 M16 2.5 v9.5 l-4 3.5" fill="none" stroke="#1e3244" stroke-width="1" /></svg>
<svg style="left:802px;top:50px;" width="17" height="17" viewBox="0 0 17 17"><path d="M2 6 L6 2.5 H16 V12 L12 15.5 H2 Z" fill="#f6fafb"/><path d="M2 6 h10 v9.5 h-10 z" fill="#4db8d4"/><path d="M6 2.5 v9.5 h10 M6 12 l-4 3.5" fill="none" stroke="#7f98a4" stroke-width="0.7" /><path d="M2 6 h10 v9.5 h-10 z M2 6 l4 -3.5 h10 l-4 3.5 M16 2.5 v9.5 l-4 3.5" fill="none" stroke="#1e3244" stroke-width="1" /></svg>
<svg style="left:824px;top:50px;" width="17" height="17" viewBox="0 0 17 17"><path d="M2 6 L6 2.5 H16 V12 L12 15.5 H2 Z" fill="#f6fafb"/><path d="M2 15.5 l4 -3.5 h10 l-4 3.5 z" fill="#8fd0dc"/><path d="M2 6 h10 v9.5 h-10 z" fill="#f6fafb"/><path d="M6 2.5 v9.5 h10 M6 12 l-4 3.5" fill="none" stroke="#7f98a4" stroke-width="0.7" /><path d="M2 6 h10 v9.5 h-10 z M2 6 l4 -3.5 h10 l-4 3.5 M16 2.5 v9.5 l-4 3.5" fill="none" stroke="#1e3244" stroke-width="1" /></svg>
<svg style="left:846px;top:50px;" width="17" height="17" viewBox="0 0 17 17"><path d="M2 6 L6 2.5 H16 V12 L12 15.5 H2 Z" fill="#f6fafb"/><path d="M2 6 l4 -3.5 h10 l-4 3.5 z" fill="#4db8d4"/><path d="M12 6 l4 -3.5 v9.5 l-4 3.5 z" fill="#8fd0dc"/><path d="M6 2.5 h10 v9.5 h-10 z" fill="#8fd0dc"/><path d="M6 2.5 v9.5 h10 M6 12 l-4 3.5" fill="none" stroke="#7f98a4" stroke-width="0.7" /><path d="M2 6 h10 v9.5 h-10 z M2 6 l4 -3.5 h10 l-4 3.5 M16 2.5 v9.5 l-4 3.5" fill="none" stroke="#1e3244" stroke-width="1" /></svg>
<svg style="left:868px;top:50px;" width="17" height="17" viewBox="0 0 17 17"><path d="M2 6 L6 2.5 H16 V12 L12 15.5 H2 Z" fill="#f6fafb"/><path d="M12 6 l4 -3.5 v9.5 l-4 3.5 z" fill="#4db8d4"/><path d="M6 2.5 v9.5 h10 M6 12 l-4 3.5" fill="none" stroke="#7f98a4" stroke-width="0.7" /><path d="M2 6 h10 v9.5 h-10 z M2 6 l4 -3.5 h10 l-4 3.5 M16 2.5 v9.5 l-4 3.5" fill="none" stroke="#1e3244" stroke-width="1" /></svg>
<svg style="left:890px;top:49px;" width="18" height="18" viewBox="0 0 18 18"><path d="M8.6 2.6 L15 6.2 V13.6 L8.6 17.2 L2.2 13.6 V6.2 Z" fill="#fbfdfd"/><path d="M15 6.2 L8.6 9.9 V17.2 L15 13.6 Z" fill="#4db8d4"/><path d="M8.6 2.6 V9.9" fill="none" stroke="#9ab0ba" stroke-width="0.7" /><path d="M8.6 2.6 L15 6.2 V13.6 L8.6 17.2 L2.2 13.6 V6.2 Z M2.2 6.2 L8.6 9.9 L15 6.2 M8.6 9.9 V17.2" fill="none" stroke="#1e3244" stroke-width="1" /></svg>
<svg style="left:912px;top:49px;" width="18" height="18" viewBox="0 0 18 18"><path d="M8.6 2.6 L15 6.2 V13.6 L8.6 17.2 L2.2 13.6 V6.2 Z" fill="#fbfdfd"/><path d="M2.2 6.2 L8.6 9.9 V17.2 L2.2 13.6 Z" fill="#4db8d4"/><path d="M8.6 2.6 V9.9" fill="none" stroke="#9ab0ba" stroke-width="0.7" /><path d="M8.6 2.6 L15 6.2 V13.6 L8.6 17.2 L2.2 13.6 V6.2 Z M2.2 6.2 L8.6 9.9 L15 6.2 M8.6 9.9 V17.2" fill="none" stroke="#1e3244" stroke-width="1" /></svg>
<svg style="left:934px;top:49px;" width="18" height="18" viewBox="0 0 18 18"><path d="M8.6 2.6 L15 6.2 V13.6 L8.6 17.2 L2.2 13.6 V6.2 Z" fill="#fbfdfd"/><path d="M8.6 2.6 L15 6.2 L8.6 9.9 Z" fill="#4db8d4"/><path d="M8.6 2.6 V9.9" fill="none" stroke="#9ab0ba" stroke-width="0.7" /><path d="M8.6 2.6 L15 6.2 V13.6 L8.6 17.2 L2.2 13.6 V6.2 Z M2.2 6.2 L8.6 9.9 L15 6.2 M8.6 9.9 V17.2" fill="none" stroke="#1e3244" stroke-width="1" /></svg>
<svg style="left:956px;top:49px;" width="18" height="18" viewBox="0 0 18 18"><path d="M8.6 2.6 L15 6.2 V13.6 L8.6 17.2 L2.2 13.6 V6.2 Z" fill="#fbfdfd"/><path d="M8.6 2.6 L8.6 9.9 L2.2 6.2 Z" fill="#4db8d4"/><path d="M2.2 6.2 L8.6 9.9 V17.2 L2.2 13.6 Z" fill="#4db8d4"/><path d="M8.6 2.6 V9.9" fill="none" stroke="#9ab0ba" stroke-width="0.7" /><path d="M8.6 2.6 L15 6.2 V13.6 L8.6 17.2 L2.2 13.6 V6.2 Z M2.2 6.2 L8.6 9.9 L15 6.2 M8.6 9.9 V17.2" fill="none" stroke="#1e3244" stroke-width="1" /></svg>
<svg style="left:990px;top:50px;" width="16" height="16" viewBox="0 0 16 16"><path d="M2 2 h9 v9 h-9 z M6 6 h9 v9 h-9 z" fill="none" stroke="#a3a8ba" stroke-width="1.3" /><rect x="0.5" y="0.5" width="3" height="3" fill="#a3a8ba"/><rect x="13" y="1" width="3" height="3" fill="#a3a8ba"/><rect x="0.5" y="13" width="3" height="3" fill="#a3a8ba"/><rect x="13.5" y="13.5" width="3" height="3" fill="#a3a8ba"/></svg>
<svg style="left:1012px;top:50px;" width="16" height="16" viewBox="0 0 16 16"><path d="M4 2.5 h9 v7 h-9 z" fill="#cfd3e0" stroke="#a3a8ba" stroke-width="1.1" /><circle cx="10" cy="10.5" r="4.5" fill="#d6d8e2" stroke="#a8acbc"/><path d="M1.5 7 h3 v3 h-3 z" fill="#e8eaf2" stroke="#a3a8ba" stroke-width="1" /></svg>
<svg style="left:12px;top:76px;" width="17" height="17" viewBox="0 0 17 17"><path d="M1 12.5 L5 10 H16 L12 12.5 Z" fill="#38c050" stroke="#1a7a30" stroke-width="0.8" /><path d="M1 14.5 L5 12 H16 L12 14.5 Z" fill="#38c050" stroke="#1a7a30" stroke-width="0.8" /><path d="M1 10.5 L5 8 H16 L12 10.5 Z" fill="#e8e060" stroke="#8a8a20" stroke-width="0.8" /><path d="M1 15.8 H12 L16 13.5" fill="none" stroke="#1a7a30" stroke-width="1" /><path d="M2 8 L6 3.5 H10 L11.5 1.5 H16 V6 L13 8.5 H6 L4.5 9.5 Z" fill="#fff" stroke="#222" stroke-width="1" /><path d="M6 3.5 L8 5.5 H13" fill="none" stroke="#222" stroke-width="0.8" /></svg>
<svg style="left:473px;top:103px;" width="16" height="16" viewBox="0 0 16 16"><path d="M1.5 1.5 h9 v10 h-9 z M3.5 3.5 h9 v10 h-9 z M5.5 5.5 h9 v10 h-9 z" fill="none" stroke="#a3a8ba" stroke-width="1.1" /></svg>
<svg style="left:495px;top:103px;" width="16" height="16" viewBox="0 0 16 16"><path d="M1.5 1.5 h5.5 v5.5 h-5.5 z M9.5 1.5 h5.5 v5.5 h-5.5 z M1.5 9.5 h5.5 v5.5 h-5.5 z M9.5 9.5 h5.5 v5.5 h-5.5 z" fill="#dde1ee" stroke="#a3a8ba" stroke-width="1.1" /></svg>
<svg style="left:517px;top:103px;" width="16" height="16" viewBox="0 0 16 16"><circle cx="8" cy="3.2" r="2.3" fill="#e4e7f2" stroke="#a3a8ba" stroke-width="1"/><circle cx="3" cy="7.5" r="2.3" fill="#e4e7f2" stroke="#a3a8ba" stroke-width="1"/><circle cx="13" cy="7.5" r="2.3" fill="#e4e7f2" stroke="#a3a8ba" stroke-width="1"/><circle cx="8" cy="12.8" r="2.3" fill="#e4e7f2" stroke="#a3a8ba" stroke-width="1"/></svg>
<svg style="left:539px;top:103px;" width="16" height="16" viewBox="0 0 16 16"><path d="M1 1 h14 v14 h-14 z" fill="none" stroke="#a3a8ba" stroke-width="1" stroke-dasharray="1 1.5"/><path d="M3.5 3 h7 v8 h-7 z M5.5 5 h7 v8 h-7 z" fill="none" stroke="#a3a8ba" stroke-width="1.1" /></svg>
<svg style="left:561px;top:103px;" width="16" height="16" viewBox="0 0 16 16"><path d="M1.8 1.8 h5 v5 h-5 z M9.2 1.8 h5 v5 h-5 z M1.8 9.2 h5 v5 h-5 z M9.2 9.2 h5 v5 h-5 z" fill="#dde1ee" stroke="#a3a8ba" stroke-width="1.2" stroke-dasharray="1.2 1"/></svg>
<svg style="left:583px;top:103px;" width="16" height="16" viewBox="0 0 16 16"><path d="M1 1 h14 v14 h-14 z" fill="none" stroke="#a3a8ba" stroke-width="1" stroke-dasharray="1 1.5"/><circle cx="8" cy="4.2" r="2.1" fill="#e4e7f2" stroke="#a3a8ba" stroke-width=".9"/><circle cx="4.4" cy="8" r="2.1" fill="#e4e7f2" stroke="#a3a8ba" stroke-width=".9"/><circle cx="11.6" cy="8" r="2.1" fill="#e4e7f2" stroke="#a3a8ba" stroke-width=".9"/><circle cx="8" cy="11.8" r="2.1" fill="#e4e7f2" stroke="#a3a8ba" stroke-width=".9"/><circle cx="8" cy="8" r="2.1" fill="#e4e7f2" stroke="#a3a8ba" stroke-width=".9"/></svg>
<svg style="left:605px;top:103px;" width="16" height="16" viewBox="0 0 16 16"><path d="M7.8 0.5 v15" fill="none" stroke="#a3a8ba" stroke-width="1.1" /><path d="M6 3 v11.5 h-5.5 z M10 3 v11.5 h5.5 z" fill="#dfe3ef" stroke="#a3a8ba" stroke-width="1.1" /></svg>
<svg style="left:627px;top:103px;" width="16" height="16" viewBox="0 0 16 16"><path d="M1.5 3.5 h7 v7 h-7 z" fill="#e4e7f2" stroke="#a3a8ba" stroke-width="1.1" /><path d="M6.5 7.5 h7 v8 h-7 z" fill="#dfe3ef" stroke="#a3a8ba" stroke-width="1.1" /><path d="M10 4 l4 -3.5 M11 0.5 h3 v3" fill="none" stroke="#a3a8ba" stroke-width="1" /></svg>
<svg style="left:660px;top:103px;" width="16" height="16" viewBox="0 0 16 16"><path d="M2 14 L13 3" fill="none" stroke="#a3a8ba" stroke-width="1.3" stroke-dasharray="3 1.5"/><path d="M1 15 l3 -1 M14 1.5 l1 -1" fill="none" stroke="#a3a8ba" stroke-width="1.3" /></svg>
<svg style="left:682px;top:103px;" width="16" height="16" viewBox="0 0 16 16"><path d="M0.5 7.5 H10 M14 3 L9 13" fill="none" stroke="#a3a8ba" stroke-width="1.2" /></svg>
<svg style="left:704px;top:103px;" width="16" height="16" viewBox="0 0 16 16"><path d="M1.5 3.5 h12 v10 h-12 z" fill="#dde1ee" stroke="#a3a8ba" stroke-width="1.2" /><path d="M7 3.5 q1 5 6.5 5.5" fill="none" stroke="#a3a8ba" stroke-width="1" /></svg>
<svg style="left:726px;top:103px;" width="16" height="16" viewBox="0 0 16 16"><path d="M0.5 7.5 H9" fill="none" stroke="#a3a8ba" stroke-width="1.2" stroke-dasharray="3 2"/><path d="M14 3 L9 13" fill="none" stroke="#a3a8ba" stroke-width="1.2" /></svg>
<svg style="left:748px;top:103px;" width="16" height="16" viewBox="0 0 16 16"><path d="M0.5 7.5 H11 M14.5 3 L10 13" fill="none" stroke="#a3a8ba" stroke-width="1.2" /></svg>
<svg style="left:770px;top:103px;" width="16" height="16" viewBox="0 0 16 16"><path d="M2.5 1.5 h5 l6 13.5 h-11 z" fill="#ecede8" stroke="#a3a8ba" stroke-width="1.1" /><path d="M7.5 2 v13" fill="none" stroke="#d8c890" stroke-width="1" stroke-dasharray="1 1"/></svg>
<svg style="left:792px;top:103px;" width="16" height="16" viewBox="0 0 16 16"><circle cx="8" cy="8" r="6.8" fill="none" stroke="#a3a8ba" stroke-width="1.1" stroke-dasharray="5 .8"/></svg>
<svg style="left:814px;top:103px;" width="16" height="16" viewBox="0 0 16 16"><path d="M2 10 A6.5 6.5 0 0 1 12 3.5" fill="none" stroke="#a3a8ba" stroke-width="1.2" /><path d="M13 2 L7 11" fill="none" stroke="#a3a8ba" stroke-width="1.2" /><path d="M13.5 5 Q15 10 11 14" fill="none" stroke="#a3a8ba" stroke-width="1" stroke-dasharray="2 1"/></svg>
<svg style="left:836px;top:103px;" width="16" height="16" viewBox="0 0 16 16"><path d="M1 1.5 L15.5 5 M1 1.5 L7 15" fill="none" stroke="#a3a8ba" stroke-width="1.2" /></svg>
<div style="left:858px;top:101px;width:1px;height:20px;background:#8a90a4;"></div>
<svg style="left:863px;top:103px;" width="16" height="16" viewBox="0 0 16 16"><path d="M2 15 V2.5 H5" fill="none" stroke="#a3a8ba" stroke-width="1" stroke-dasharray="1.2 1.2"/><path d="M3.5 15 V6 Q4 2.5 9 2.5 H15" fill="none" stroke="#a3a8ba" stroke-width="1.2" /></svg>
<svg style="left:885px;top:103px;" width="16" height="16" viewBox="0 0 16 16"><path d="M2 15 V2.5 H5" fill="none" stroke="#a3a8ba" stroke-width="1" stroke-dasharray="1.2 1.2"/><path d="M2 2.5 H15" fill="none" stroke="#a3a8ba" stroke-width="1.2" /><path d="M5 15 V7 Q5.5 4.5 9 4.5 H13" fill="none" stroke="#a3a8ba" stroke-width="1.2" /></svg>
<svg style="left:907px;top:103px;" width="16" height="16" viewBox="0 0 16 16"><path d="M2 15 V2.5 H5" fill="none" stroke="#a3a8ba" stroke-width="1" stroke-dasharray="1.2 1.2"/><path d="M2 2.5 H15" fill="none" stroke="#a3a8ba" stroke-width="1.2" /><path d="M5 15 V8 L9 4.5 H13" fill="none" stroke="#a3a8ba" stroke-width="1.2" /><path d="M1 8 l2 2" fill="none" stroke="#a3a8ba" stroke-width="1" /></svg>
<svg style="left:929px;top:103px;" width="16" height="16" viewBox="0 0 16 16"><path d="M2 15 V2.5 H5" fill="none" stroke="#a3a8ba" stroke-width="1" stroke-dasharray="1.2 1.2"/><path d="M2 2.5 H15" fill="none" stroke="#a3a8ba" stroke-width="1" stroke-dasharray="1.2 1.2"/><path d="M6 15 V6 M5 8 L13 3 M7 10 L15 4.5" fill="none" stroke="#a3a8ba" stroke-width="1.1" /></svg>
<div style="left:952px;top:101px;width:1px;height:20px;background:#8a90a4;"></div>
<svg style="left:957px;top:103px;" width="16" height="16" viewBox="0 0 16 16"><path d="M1 13 L13 1 M9 5 L15 10 M4 15 L9 10" fill="none" stroke="#a3a8ba" stroke-width="1.2" /></svg>
<svg style="left:979px;top:103px;" width="16" height="16" viewBox="0 0 16 16"><path d="M5.5 0.5 v5 h-5 M10.5 0.5 v5 h5 M5.5 15.5 v-5 h-5 M10.5 15.5 v-5 h5" fill="none" stroke="#a3a8ba" stroke-width="1.3" /><rect x="6" y="6" width="4" height="4" fill="#f4f5fa"/></svg>
<svg style="left:1001px;top:103px;" width="16" height="16" viewBox="0 0 16 16"><path d="M4.5 8 V2 h8 v6" fill="none" stroke="#a3a8ba" stroke-width="1.4" /><path d="M1.5 8 h14 v6.5 h-14 z" fill="none" stroke="#a3a8ba" stroke-width="1.6" /><path d="M5 5 h7" fill="none" stroke="#a3a8ba" stroke-width="1" /></svg>
<svg style="left:1036px;top:103px;" width="16" height="16" viewBox="0 0 16 16"><path d="M2 14 L14 2" fill="none" stroke="#111" stroke-width="0.85" /><path d="M14.0 2.0 L13.4 4.5 L11.5 2.6 Z" fill="#111"/><path d="M2.0 14.0 L2.6 11.5 L4.5 13.4 Z" fill="#111"/><rect x="6.5" y="6.5" width="2" height="2" fill="#ffffff" stroke="#2222c4" stroke-width="1"/></svg>
<svg style="left:1058px;top:103px;" width="16" height="16" viewBox="0 0 16 16"><path d="M1 8 L15 8" fill="none" stroke="#111" stroke-width="0.9" /><path d="M15.0 8.0 L12.9 9.2 L12.9 6.8 Z" fill="#111"/><path d="M1.0 8.0 L3.1 6.8 L3.1 9.2 Z" fill="#111"/><rect x="6.5" y="6.5" width="2" height="2" fill="#ffffff" stroke="#2222c4" stroke-width="1"/></svg>
<svg style="left:1080px;top:103px;" width="16" height="16" viewBox="0 0 16 16"><path d="M8.5 1 V15.5" fill="none" stroke="#111" stroke-width="1.2" /><rect x="7.5" y="6.5" width="2" height="2" fill="#ffffff" stroke="#2222c4" stroke-width="1"/></svg>
<svg style="left:1102px;top:103px;" width="16" height="16" viewBox="0 0 16 16"><path d="M2 14.5 L14.5 2" fill="none" stroke="#111" stroke-width="0.85" /><path d="M14.5 2.0 L13.9 4.5 L12.0 2.6 Z" fill="#111"/><path d="M2.0 14.5 L2.6 12.0 L4.5 13.9 Z" fill="#111"/><rect x="5.5" y="9.5" width="2" height="2" fill="#ffffff" stroke="#2222c4" stroke-width="1"/><rect x="9.5" y="5.5" width="2" height="2" fill="#ffffff" stroke="#2222c4" stroke-width="1"/></svg>
<svg style="left:1124px;top:103px;" width="16" height="16" viewBox="0 0 16 16"><path d="M3 15 L15 3" fill="none" stroke="#111" stroke-width="0.85" /><path d="M15.0 3.0 L14.4 5.5 L12.5 3.6 Z" fill="#111"/><path d="M3.0 15.0 L3.6 12.5 L5.5 14.4 Z" fill="#111"/><path d="M8.5 1.5 V9" fill="none" stroke="#2222c4" stroke-width="1.1" /><rect x="7.5" y="0.5" width="2" height="2" fill="#ffffff" stroke="#2222c4" stroke-width="1"/><rect x="7.5" y="8.5" width="2" height="2" fill="#ffffff" stroke="#2222c4" stroke-width="1"/></svg>
<svg style="left:1146px;top:103px;" width="16" height="16" viewBox="0 0 16 16"><path d="M1.5 12 L12 1.5" fill="none" stroke="#111" stroke-width="0.85" /><path d="M12.0 1.5 L11.4 4.0 L9.5 2.1 Z" fill="#111"/><path d="M1.5 12.0 L2.1 9.5 L4.0 11.4 Z" fill="#111"/><rect x="6.5" y="5.5" width="2" height="2" fill="#ffffff" stroke="#2222c4" stroke-width="1"/><path d="M7 16 L15 6" fill="none" stroke="#6a8a6a" stroke-width="0.9" stroke-dasharray="2 1"/><rect x="10.5" y="10.5" width="2" height="2" fill="#ffe0e6" stroke="#e03060" stroke-width="1"/></svg>
<svg style="left:1168px;top:103px;" width="16" height="16" viewBox="0 0 16 16"><path d="M2 15 L13 1.5" fill="none" stroke="#8a9a5a" stroke-width="0.9" /><path d="M14 5 l-10 -3" fill="none" stroke="#c09080" stroke-width="0" /><path d="M2.5 2.5 L15 15" fill="none" stroke="#111" stroke-width="0.85" /><path d="M15.0 15.0 L12.5 14.4 L14.4 12.5 Z" fill="#111"/><path d="M2.5 2.5 L5.0 3.1 L3.1 5.0 Z" fill="#111"/><rect x="6.5" y="6.5" width="2" height="2" fill="#f4e0e0" stroke="#c05060" stroke-width="1"/><rect x="10.5" y="10.5" width="2" height="2" fill="#ffffff" stroke="#2222c4" stroke-width="1"/></svg>
<svg style="left:1190px;top:103px;" width="16" height="16" viewBox="0 0 16 16"><rect x="0" y="4" width="16.5" height="8.5" fill="#ccd0dc" stroke="#dde0ea" stroke-width="1"/><text x="1.2" y="11" font-family="Liberation Sans" font-weight="bold" font-size="7.5" fill="#e6e8f0" textLength="14" lengthAdjust="spacingAndGlyphs">PRO</text></svg>
<svg style="left:1212px;top:103px;" width="16" height="16" viewBox="0 0 16 16"><path d="M2 14 L14 2 M3 2 L13.5 13" fill="none" stroke="#8088a8" stroke-width="0.8" stroke-dasharray="2 1.2"/><rect x="2.5" y="11.5" width="2" height="2" fill="#fff" stroke="#222" stroke-width="1"/><rect x="12.5" y="1.5" width="2" height="2" fill="#fff" stroke="#222" stroke-width="1"/><rect x="7.5" y="6.5" width="2" height="2" fill="#ffffff" stroke="#2222c4" stroke-width="1"/></svg>
<svg style="left:1234px;top:103px;" width="16" height="16" viewBox="0 0 16 16"><circle cx="8" cy="8" r="6.6" fill="none" stroke="#8a8f9a" stroke-width="1" stroke-dasharray="2.6 1.6"/><rect x="6.5" y="6.5" width="2" height="2" fill="#ffffff" stroke="#2222c4" stroke-width="1"/><rect x="13.5" y="6.5" width="2" height="2" fill="#ffffff" stroke="#2222c4" stroke-width="1"/></svg>
<svg style="left:1256px;top:103px;" width="16" height="16" viewBox="0 0 16 16"><circle cx="8" cy="8" r="6.6" fill="none" stroke="#8a8f9a" stroke-width="1" stroke-dasharray="2.6 1.6"/><rect x="0.5" y="6.5" width="2" height="2" fill="#ffffff" stroke="#2222c4" stroke-width="1"/><rect x="13.5" y="6.5" width="2" height="2" fill="#ffffff" stroke="#2222c4" stroke-width="1"/></svg>
<svg style="left:1278px;top:103px;" width="16" height="16" viewBox="0 0 16 16"><circle cx="8" cy="8" r="6.6" fill="none" stroke="#8a8f9a" stroke-width="1" stroke-dasharray="2.6 1.6"/><rect x="2.5" y="2.5" width="2" height="2" fill="#ffffff" stroke="#2222c4" stroke-width="1"/><rect x="11.5" y="2.5" width="2" height="2" fill="#ffffff" stroke="#2222c4" stroke-width="1"/><rect x="7.5" y="13.5" width="2" height="2" fill="#ffffff" stroke="#2222c4" stroke-width="1"/></svg>
<svg style="left:1300px;top:103px;" width="16" height="16" viewBox="0 0 16 16"><path d="M3 12 L15 0.5" fill="none" stroke="#9aa0b8" stroke-width="0.9" stroke-dasharray="1.5 1.5"/><rect x="2.5" y="10.5" width="2" height="2" fill="#ffffff" stroke="#2222c4" stroke-width="1"/><rect x="7.5" y="4.5" width="2" height="2" fill="#ffffff" stroke="#2222c4" stroke-width="1"/></svg>
<svg style="left:1322px;top:103px;" width="16" height="16" viewBox="0 0 16 16"><path d="M8.5 1 V11" fill="none" stroke="#667" stroke-width="1" stroke-dasharray="2 1.5"/><rect x="7.5" y="10.5" width="2" height="2" fill="#ffffff" stroke="#2222c4" stroke-width="1"/></svg>
<svg style="left:1344px;top:103px;" width="16" height="16" viewBox="0 0 16 16"><path d="M4 7.5 H14" fill="none" stroke="#8088a0" stroke-width="1" stroke-dasharray="3 1.5"/><rect x="2.5" y="6.5" width="2" height="2" fill="#ffffff" stroke="#2222c4" stroke-width="1"/></svg>
<div style="left:2px;top:134px;width:22px;height:20px;border:1px solid #6a6a6a;border-radius:3px;background:linear-gradient(180deg,#cfcfcf,#dedede);box-shadow:inset 0 1px 2px rgba(0,0,0,.3);"></div>
<svg style="left:10px;top:137px;" width="16" height="16" viewBox="0 0 16 16"><path d="M0.5 0.5 V11.5 L3.2 9 L5.2 13.3 L7 12.5 L5 8.3 H8.5 Z" fill="#fff" stroke="#000" stroke-width="1" /></svg>
<svg style="left:5px;top:158px;" width="16" height="16" viewBox="0 0 16 16"><path d="M2 6 v9 h9" fill="none" stroke="#adadad" stroke-width="1" stroke-dasharray="1.5 1"/><path d="M3 13 L13 3 l2 -2" fill="none" stroke="#adadad" stroke-width="2.6" /><path d="M1.5 14.5 l1 -3 l2 2 z" fill="#adadad" stroke="#adadad" stroke-width="1" /><rect x="1" y="13.5" width="2.5" height="2.5" fill="#f4f4f4" stroke="#a8a8a8" stroke-width=".8"/></svg>
<svg style="left:5px;top:180px;" width="16" height="16" viewBox="0 0 16 16"><path d="M2.5 13.5 L13.5 2.5" fill="none" stroke="#111" stroke-width="1.1" /><rect x="1.5" y="12.5" width="2" height="2" fill="#ffffff" stroke="#2222c4" stroke-width="1"/><rect x="12.5" y="1.5" width="2" height="2" fill="#ffffff" stroke="#2222c4" stroke-width="1"/></svg>
<svg style="left:21px;top:195px;" width="4" height="4" viewBox="0 0 4 4"><path d="M4 0 v4 h-4 z" fill="#000"/></svg>
<svg style="left:5px;top:202px;" width="16" height="16" viewBox="0 0 16 16"><path d="M1.5 14.5 L14.5 1.5" fill="none" stroke="#333" stroke-width="0.9" /><path d="M14.5 1.5 L13.9 4.0 L12.0 2.1 Z" fill="#333"/><path d="M1.5 14.5 L2.1 12.0 L4.0 13.9 Z" fill="#333"/><path d="M4 12 L12 4" fill="none" stroke="#f0f0f0" stroke-width="1.2" stroke-dasharray="1 2"/><rect x="6.5" y="7.5" width="2" height="2" fill="#ffffff" stroke="#2222c4" stroke-width="1"/></svg>
<svg style="left:21px;top:217px;" width="4" height="4" viewBox="0 0 4 4"><path d="M4 0 v4 h-4 z" fill="#000"/></svg>
<svg style="left:5px;top:224px;" width="16" height="16" viewBox="0 0 16 16"><path d="M2 12.5 H10.5 A4.3 4.3 0 1 0 9.5 4.2" fill="none" stroke="#111" stroke-width="1.1" /><rect x="0.5" y="11.5" width="2" height="2" fill="#ffffff" stroke="#2222c4" stroke-width="1"/><rect x="9.5" y="11.5" width="2" height="2" fill="#ffffff" stroke="#2222c4" stroke-width="1"/><rect x="8.5" y="2.5" width="2" height="2" fill="#ffffff" stroke="#2222c4" stroke-width="1"/></svg>
<svg style="left:21px;top:239px;" width="4" height="4" viewBox="0 0 4 4"><path d="M4 0 v4 h-4 z" fill="#000"/></svg>
<svg style="left:5px;top:246px;" width="16" height="16" viewBox="0 0 16 16"><path d="M8 2 L14.5 6.8 L12 14 H4 L1.5 6.8 Z" fill="#ececec" stroke="#111" stroke-width="1.1" /></svg>
<svg style="left:21px;top:261px;" width="4" height="4" viewBox="0 0 4 4"><path d="M4 0 v4 h-4 z" fill="#000"/></svg>
<svg style="left:5px;top:268px;" width="16" height="16" viewBox="0 0 16 16"><path d="M2 3.5 L14.5 4.5 L14 12.5 L2.5 12 Z" fill="#ebebeb" stroke="#111" stroke-width="1.1" /><rect x="0.5" y="2.5" width="2" height="2" fill="#ffffff" stroke="#2222c4" stroke-width="1"/><rect x="13.5" y="11.5" width="2" height="2" fill="#ffffff" stroke="#2222c4" stroke-width="1"/></svg>
<svg style="left:21px;top:283px;" width="4" height="4" viewBox="0 0 4 4"><path d="M4 0 v4 h-4 z" fill="#000"/></svg>
<svg style="left:5px;top:290px;" width="16" height="16" viewBox="0 0 16 16"><path d="M2.5 13 Q3 4 12.5 2" fill="none" stroke="#111" stroke-width="1.1" /><rect x="11.5" y="1.5" width="2" height="2" fill="#ffffff" stroke="#2222c4" stroke-width="1"/><rect x="11.5" y="11.5" width="2" height="2" fill="#ffffff" stroke="#2222c4" stroke-width="1"/><path d="M2.5 10.4 l2.2 2.6 l-2.2 2.6 l-2.2 -2.6 z" fill="#e4e6ff" stroke="#2222c4" stroke-width="1"/></svg>
<svg style="left:21px;top:305px;" width="4" height="4" viewBox="0 0 4 4"><path d="M4 0 v4 h-4 z" fill="#000"/></svg>
<svg style="left:5px;top:312px;" width="16" height="16" viewBox="0 0 16 16"><circle cx="8" cy="8.5" r="7" fill="#ececec" stroke="#111" stroke-width="1.2"/><path d="M8 9 L13 4" fill="none" stroke="#111" stroke-width="1" /><rect x="6.5" y="8.5" width="2" height="2" fill="#ffffff" stroke="#2222c4" stroke-width="1"/></svg>
<svg style="left:21px;top:327px;" width="4" height="4" viewBox="0 0 4 4"><path d="M4 0 v4 h-4 z" fill="#000"/></svg>
<svg style="left:5px;top:334px;" width="16" height="16" viewBox="0 0 16 16"><path d="M2 14.5 Q1 6 6 6.5 Q9.5 7.5 11 10 Q13.5 13.5 14.5 2" fill="none" stroke="#111" stroke-width="1.2" /></svg>
<svg style="left:21px;top:349px;" width="4" height="4" viewBox="0 0 4 4"><path d="M4 0 v4 h-4 z" fill="#000"/></svg>
<svg style="left:5px;top:356px;" width="16" height="16" viewBox="0 0 16 16"><ellipse cx="8" cy="9" rx="7" ry="4.6" fill="#ececec" stroke="#111" stroke-width="1.1"/><rect x="6.5" y="3.5" width="2" height="2" fill="#ffffff" stroke="#2222c4" stroke-width="1"/><rect x="6.5" y="8.5" width="2" height="2" fill="#ffffff" stroke="#2222c4" stroke-width="1"/><rect x="14.5" y="8.5" width="2" height="2" fill="#ffffff" stroke="#2222c4" stroke-width="1"/></svg>
<svg style="left:21px;top:371px;" width="4" height="4" viewBox="0 0 4 4"><path d="M4 0 v4 h-4 z" fill="#000"/></svg>
<svg style="left:5px;top:378px;" width="16" height="16" viewBox="0 0 16 16"><path d="M5.5 1.5 h6 v11 h-6 z" fill="#f6f6f6" stroke="#adadad" stroke-width="1" /><path d="M10 11.5 l2.5 3" fill="none" stroke="#adadad" stroke-width="1.2" /></svg>
<svg style="left:21px;top:393px;" width="4" height="4" viewBox="0 0 4 4"><path d="M4 0 v4 h-4 z" fill="#000"/></svg>
<svg style="left:5px;top:400px;" width="16" height="16" viewBox="0 0 16 16"><path d="M4 2.5 h9 v6.5 h-9 z" fill="#d4d4d4" stroke="#adadad" stroke-width="1" /><circle cx="10.5" cy="10.5" r="4.3" fill="#d8d8d8" stroke="#a8a8a8"/><path d="M1.5 6.5 h3 v3 h-3 z" fill="#f4f4f4" stroke="#adadad" stroke-width="1" /></svg>
<svg style="left:21px;top:415px;" width="4" height="4" viewBox="0 0 4 4"><path d="M4 0 v4 h-4 z" fill="#000"/></svg>
<svg style="left:5px;top:422px;" width="16" height="16" viewBox="0 0 16 16"><circle cx="9.5" cy="8" r="1.4" fill="#222"/></svg>
<svg style="left:21px;top:437px;" width="4" height="4" viewBox="0 0 4 4"><path d="M4 0 v4 h-4 z" fill="#000"/></svg>
<svg style="left:5px;top:444px;" width="16" height="16" viewBox="0 0 16 16"><path d="M1.5 1.5 h8 l4 4 v3 h-12 z" fill="#fff" stroke="#c02020" stroke-width="1.1" /><path d="M9.5 1.5 v4 h4" fill="#fff" stroke="#c02020" stroke-width="1" /><rect x="2.5" y="2.5" width="3" height="3" fill="#e03030"/><rect x="5" y="6" width="10.5" height="9.5" fill="#4848f0"/><path d="M6 15 L15 6" fill="none" stroke="#8a6ae0" stroke-width="0.8" /></svg>
<svg style="left:21px;top:459px;" width="4" height="4" viewBox="0 0 4 4"><path d="M4 0 v4 h-4 z" fill="#000"/></svg>
<svg style="left:5px;top:466px;" width="16" height="16" viewBox="0 0 16 16"><text x="1.5" y="15" font-family="Liberation Sans" font-size="17" fill="#444" textLength="13" lengthAdjust="spacingAndGlyphs">A</text></svg>
<svg style="left:21px;top:481px;" width="4" height="4" viewBox="0 0 4 4"><path d="M4 0 v4 h-4 z" fill="#000"/></svg>
<svg style="left:5px;top:488px;" width="16" height="16" viewBox="0 0 16 16"><rect x="0" y="4" width="16.5" height="8.5" fill="#d4d4d4" stroke="#e0e0e0" stroke-width="1"/><text x="1.2" y="11" font-family="Liberation Sans" font-weight="bold" font-size="7.5" fill="#ececec" textLength="14" lengthAdjust="spacingAndGlyphs">PRO</text></svg>
<svg style="left:21px;top:503px;" width="4" height="4" viewBox="0 0 4 4"><path d="M4 0 v4 h-4 z" fill="#000"/></svg>
<svg style="left:5px;top:510px;" width="16" height="16" viewBox="0 0 16 16"><path d="M1.5 0.5 h11 l3 3 v12 h-14 z" fill="#f6f6f6" stroke="#8a8a8a" stroke-width="1" /><path d="M4 5 h9 v8.5 h-9 z" fill="#e8e8e8" stroke="#8a8a8a" stroke-width="1" /><path d="M6 11.5 L11 6.5 M8 6.5 h3 v3" fill="none" stroke="#777" stroke-width="1" /></svg>
<div style="left:0px;top:529px;width:26px;height:1px;background:#dadada;"></div>
<div style="left:0px;top:530px;width:26px;height:1px;background:#fff;"></div>
<svg style="left:1345px;top:136px;" width="16" height="16" viewBox="0 0 16 16"><path d="M3 12 L11 3 L15 6 L7.5 14.5 Z" fill="#f0e060" stroke="#b0a060" stroke-width="0.8" /><path d="M3 12 L6 8.7 L10.5 11.3 L7.5 14.5 Z" fill="#e06070" stroke="#b04050" stroke-width="0.8" /><path d="M11 3 L12.5 1.5 L16 4.5 L15 6" fill="#ddd" stroke="#888" stroke-width="0.8" /><path d="M9 15.5 h7" fill="none" stroke="#222" stroke-width="1.2" /></svg>
<svg style="left:1345px;top:158px;" width="16" height="16" viewBox="0 0 16 16"><circle cx="5" cy="5" r="3.8" fill="none" stroke="#adadad" stroke-width="1.1"/><circle cx="8" cy="11.5" r="3.8" fill="none" stroke="#adadad" stroke-width="1.1"/><circle cx="11.5" cy="9.5" r="3.8" fill="none" stroke="#adadad" stroke-width="1.1"/><path d="M9 2 q4 0 5 3.5 M14 5.5 l-2.4 -1 M14 5.5 l1 -2.4" fill="none" stroke="#adadad" stroke-width="1" /></svg>
<svg style="left:1345px;top:180px;" width="16" height="16" viewBox="0 0 16 16"><path d="M1.5 3.5 h8 v8 h-8 z" fill="#f4f4f4" stroke="#adadad" stroke-width="1.1" /><path d="M6.5 7.5 h7 v8 h-7 z" fill="#ececec" stroke="#adadad" stroke-width="1.1" /><path d="M10 4 l4 -3.5 M11 0.5 h3 v3" fill="none" stroke="#adadad" stroke-width="1" /></svg>
<svg style="left:1345px;top:202px;" width="16" height="16" viewBox="0 0 16 16"><path d="M8 0.5 v15" fill="none" stroke="#adadad" stroke-width="1.1" /><path d="M6 3 v11.5 h-5.5 z M10 3 v11.5 h5.5 z" fill="#ececec" stroke="#adadad" stroke-width="1.1" /></svg>
<svg style="left:1345px;top:224px;" width="16" height="16" viewBox="0 0 16 16"><path d="M1.5 1.5 h5.5 v5.5 h-5.5 z M9.5 1.5 h5.5 v5.5 h-5.5 z M1.5 9.5 h5.5 v5.5 h-5.5 z M9.5 9.5 h5.5 v5.5 h-5.5 z" fill="#ececec" stroke="#adadad" stroke-width="1.1" /></svg>
<div style="left:1344px;top:246px;width:18px;height:1px;background:#8f8f8f;"></div>
<svg style="left:1345px;top:252px;" width="16" height="16" viewBox="0 0 16 16"><path d="M8 2.5 A6 6 0 1 0 14 8.5" fill="none" stroke="#adadad" stroke-width="1.4" /><path d="M8 0 v5.5 l-3.5 -2.7 z" fill="#adadad" stroke="#adadad" stroke-width="0.5" /><path d="M14 8.5 V3" fill="none" stroke="#adadad" stroke-width="1.1" /></svg>
<svg style="left:1361px;top:267px;" width="4" height="4" viewBox="0 0 4 4"><path d="M4 0 v4 h-4 z" fill="#000"/></svg>
<div style="left:1344px;top:274px;width:18px;height:1px;background:#8f8f8f;"></div>
<svg style="left:1345px;top:280px;" width="16" height="16" viewBox="0 0 16 16"><path d="M2.5 1.5 h5 l6 13.5 h-11 z" fill="#f4f4f2" stroke="#adadad" stroke-width="1.1" /><path d="M7.5 2 v13" fill="none" stroke="#adadad" stroke-width="1" stroke-dasharray="1 1"/></svg>
<svg style="left:1345px;top:302px;" width="16" height="16" viewBox="0 0 16 16"><circle cx="8" cy="8" r="7" fill="none" stroke="#adadad" stroke-width="1.1"/></svg>
<svg style="left:1345px;top:325px;" width="16" height="16" viewBox="0 0 16 16"><path d="M1 7.5 H11 M14.5 2 L10 13" fill="none" stroke="#adadad" stroke-width="1.2" /></svg>
<svg style="left:1345px;top:347px;" width="16" height="16" viewBox="0 0 16 16"><path d="M1 1.5 L15.5 5 M1 1.5 L7 15" fill="none" stroke="#adadad" stroke-width="1.2" /></svg>
<svg style="left:1361px;top:362px;" width="4" height="4" viewBox="0 0 4 4"><path d="M4 0 v4 h-4 z" fill="#000"/></svg>
<svg style="left:1345px;top:369px;" width="16" height="16" viewBox="0 0 16 16"><path d="M1.5 4.5 h11 v10 h-11 z" fill="#ececec" stroke="#adadad" stroke-width="1.2" /><path d="M6 4.5 q1 5 6.5 5.5" fill="none" stroke="#adadad" stroke-width="1" /><circle cx="11" cy="4" r="3.4" fill="none" stroke="#adadad" stroke-width=".8" stroke-dasharray="1.5 1"/></svg>
<div style="left:1344px;top:390px;width:18px;height:1px;background:#8f8f8f;"></div>
<svg style="left:1345px;top:396px;" width="16" height="16" viewBox="0 0 16 16"><path d="M2 2.5 H15" fill="none" stroke="#adadad" stroke-width="1.2" /><path d="M3 2.5 Q4 12 14 13" fill="none" stroke="#adadad" stroke-width="1" stroke-dasharray="1.2 1.2"/><path d="M5 15 V8 L9 4.5 H13" fill="none" stroke="#adadad" stroke-width="1.2" /><path d="M1 8 l2 2" fill="none" stroke="#adadad" stroke-width="1" /></svg>
<svg style="left:1361px;top:411px;" width="4" height="4" viewBox="0 0 4 4"><path d="M4 0 v4 h-4 z" fill="#000"/></svg>
<div style="left:1344px;top:418px;width:18px;height:1px;background:#8f8f8f;"></div>
<svg style="left:1345px;top:424px;" width="16" height="16" viewBox="0 0 16 16"><path d="M3 1.5 H6" fill="none" stroke="#adadad" stroke-width="1" stroke-dasharray="1.2 1.2"/><path d="M2.5 15 V8 Q3 2.5 10 2.5 H15" fill="none" stroke="#adadad" stroke-width="1.3" /></svg>
<svg style="left:1345px;top:446px;" width="16" height="16" viewBox="0 0 16 16"><rect x="1.5" y="1.5" width="6" height="6" fill="#c8c8c8" stroke="#8f8f8f" stroke-width="1"/><rect x="5.5" y="5.5" width="6" height="6" fill="#c8c8c8" stroke="#8f8f8f" stroke-width="1"/><rect x="9.5" y="9.5" width="6" height="6" fill="#c8c8c8" stroke="#8f8f8f" stroke-width="1"/></svg>
<svg style="left:1361px;top:461px;" width="4" height="4" viewBox="0 0 4 4"><path d="M4 0 v4 h-4 z" fill="#000"/></svg>
<svg style="left:1345px;top:469px;" width="16" height="16" viewBox="0 0 16 16"><path d="M2 14 L14 2" fill="none" stroke="#adadad" stroke-width="2.2" stroke-dasharray="3 1.5"/><path d="M3 5 l3 3 M10 8 l3 3 M8 2 v3 M8 11 v4" fill="none" stroke="#adadad" stroke-width="0.9" stroke-dasharray="1 1"/></svg>
<svg style="left:1345px;top:491px;" width="16" height="16" viewBox="0 0 16 16"><circle cx="8" cy="9" r="6" fill="none" stroke="#adadad" stroke-width="1.1"/><path d="M14 1.5 L6 12" fill="none" stroke="#adadad" stroke-width="1.1" /></svg>
<div style="left:1344px;top:511px;width:18px;height:1px;background:#8f8f8f;"></div>
<svg style="left:1345px;top:518px;" width="16" height="16" viewBox="0 0 16 16"><path d="M4.5 8 V2 h8 v6" fill="none" stroke="#adadad" stroke-width="1.4" /><path d="M1.5 8 h14 v6.5 h-14 z" fill="none" stroke="#adadad" stroke-width="1.6" /><path d="M5 5 h7" fill="none" stroke="#adadad" stroke-width="1" /></svg>
<div style="left:1340px;top:538px;width:26px;height:1px;background:#b4b4b4;"></div>
<div style="left:1340px;top:539px;width:26px;height:1px;background:#fafafa;"></div>
<div style="left:1365px;top:124px;width:1px;height:415px;background:#c4c4c4;"></div>
<div style="left:1340px;top:124px;width:1px;height:414px;background:#fafafa;"></div>
<div style="left:1090px;top:123px;width:251px;height:560px;background:#d6dff0;"></div>
<div style="left:1090px;top:123px;width:250px;height:23px;border:1px solid #6f7b8e;border-bottom:none;border-right-color:#8d99ab;background:linear-gradient(180deg,#c6d2e3 0%,#d2dcea 40%,#e0e8f4 100%);"></div>
<span style="left:1094px;top:126.84px;line-height:16px;font-size:12px;color:#3a4658;transform:scaleX(1.0351);">Tools</span>
<div style="left:1322px;top:126px;width:16px;height:16px;border:1px solid #c9c9c9;background:linear-gradient(180deg,#d4d4d4,#b4b4b4);border-radius:2px;"></div>
<svg style="left:1322px;top:126px;" width="16" height="16" viewBox="0 0 16 16"><path d="M4.5 4.5 L11.5 11.5 M11.5 4.5 L4.5 11.5" stroke="#fff" stroke-width="2.4"/></svg>
<div style="left:1090px;top:146px;width:250px;height:27px;background:linear-gradient(180deg,#f2f4fb 0%,#dfe4f3 35%,#cdd5eb 100%);border-bottom:1px solid #b9c2da;border-top:1px solid #eef1f8;"></div>
<div style="left:1092px;top:151px;width:22px;height:20px;border:1px solid #5f6778;border-radius:3px;background:linear-gradient(180deg,#bcc2d6,#d2d8ea);box-shadow:inset 0 1px 2px rgba(60,70,100,.35);"></div>
<div style="left:1160px;top:151px;width:1px;height:20px;background:#8d95ab;"></div>
<div style="left:1164px;top:150px;width:98px;height:22px;border:1px solid #8e98b0;background:#fff;"></div>
<span style="left:1167px;top:152.84px;line-height:16px;font-size:12px;color:#000;transform:scaleX(0.9210);">Draw 2D</span>
<div style="left:1247px;top:152px;width:14px;height:18px;border:1px solid #9a9a9a;background:linear-gradient(180deg,#f4f4f4,#d4d4d4);"></div>
<svg style="left:1250px;top:159px;" width="8" height="5" viewBox="0 0 8 5"><path d="M0 0 h8 l-4 5 z" fill="#000"/></svg>
<div style="left:1090px;top:173px;width:233px;height:510px;background:#e1e6f1;"></div>
<div style="left:1092px;top:176px;width:230px;height:507px;background:#cfd5e1;"></div>
<div style="left:1323px;top:176px;width:17px;height:507px;background:#eceef2;"></div>
<svg style="left:1328px;top:182px;" width="8" height="5" viewBox="0 0 8 5"><path d="M0 5 h8 l-4 -5 z" fill="#444"/></svg>
<svg style="left:1328px;top:671px;" width="8" height="5" viewBox="0 0 8 5"><path d="M0 0 h8 l-4 5 z" fill="#444"/></svg>
<div style="left:1324px;top:193px;width:15px;height:263px;border:1px solid #979797;border-radius:3px;background:linear-gradient(90deg,#f5f5f5 0%,#e9e9eb 45%,#d9dadc 50%,#cfcfd2 100%);"></div>
<svg style="left:1327px;top:320px;" width="8" height="8" viewBox="0 0 8 8"><path d="M0 1 h8 M0 4 h8 M0 7 h8" stroke="#5a6270" stroke-width="1"/></svg>
<div style="left:1092px;top:178px;width:230px;height:124px;background:#f1f4fa;"></div>
<div style="left:1092px;top:302px;width:230px;height:1px;background:#dde2ec;"></div>
<div style="left:1092px;top:178px;width:230px;height:24px;background:linear-gradient(90deg,#ffffff 0%,#fbfcfe 40%,#dde4f2 100%);"></div>
<span style="left:1105px;top:182.84px;line-height:16px;font-size:12px;color:#2f6cb4;font-weight:bold;transform:scaleX(0.9478);">Snap Modes</span>
<svg style="left:1299px;top:180px;" width="17" height="17" viewBox="0 0 17 17"><circle cx="8.5" cy="8.5" r="7.5" fill="#fbfcfe" stroke="#c3cfe3"/><path d="M5.5 8 L8.5 5 L11.5 8 M5.5 12 L8.5 9 L11.5 12" fill="none" stroke="#1f4f9c" stroke-width="1.4"/></svg>
<div style="left:1092px;top:306px;width:230px;height:96px;background:#f1f4fa;"></div>
<div style="left:1092px;top:402px;width:230px;height:1px;background:#dde2ec;"></div>
<div style="left:1092px;top:306px;width:230px;height:24px;background:linear-gradient(90deg,#ffffff 0%,#fbfcfe 40%,#dde4f2 100%);"></div>
<span style="left:1105px;top:310.84px;line-height:16px;font-size:12px;color:#2f6cb4;font-weight:bold;transform:scaleX(0.9322);">Line</span>
<svg style="left:1299px;top:308px;" width="17" height="17" viewBox="0 0 17 17"><circle cx="8.5" cy="8.5" r="7.5" fill="#fbfcfe" stroke="#c3cfe3"/><path d="M5.5 8 L8.5 5 L11.5 8 M5.5 12 L8.5 9 L11.5 12" fill="none" stroke="#1f4f9c" stroke-width="1.4"/></svg>
<div style="left:1092px;top:406px;width:230px;height:68px;background:#f1f4fa;"></div>
<div style="left:1092px;top:474px;width:230px;height:1px;background:#dde2ec;"></div>
<div style="left:1092px;top:406px;width:230px;height:24px;background:linear-gradient(90deg,#ffffff 0%,#fbfcfe 40%,#dde4f2 100%);"></div>
<span style="left:1105px;top:410.84px;line-height:16px;font-size:12px;color:#2f6cb4;font-weight:bold;transform:scaleX(0.9311);">Polyline and Polygon</span>
<svg style="left:1299px;top:408px;" width="17" height="17" viewBox="0 0 17 17"><circle cx="8.5" cy="8.5" r="7.5" fill="#fbfcfe" stroke="#c3cfe3"/><path d="M5.5 8 L8.5 5 L11.5 8 M5.5 12 L8.5 9 L11.5 12" fill="none" stroke="#1f4f9c" stroke-width="1.4"/></svg>
<div style="left:1092px;top:478px;width:230px;height:124px;background:#f1f4fa;"></div>
<div style="left:1092px;top:602px;width:230px;height:1px;background:#dde2ec;"></div>
<div style="left:1092px;top:478px;width:230px;height:24px;background:linear-gradient(90deg,#ffffff 0%,#fbfcfe 40%,#dde4f2 100%);"></div>
<span style="left:1105px;top:482.84px;line-height:16px;font-size:12px;color:#2f6cb4;font-weight:bold;transform:scaleX(0.9493);">Arc</span>
<svg style="left:1299px;top:480px;" width="17" height="17" viewBox="0 0 17 17"><circle cx="8.5" cy="8.5" r="7.5" fill="#fbfcfe" stroke="#c3cfe3"/><path d="M5.5 8 L8.5 5 L11.5 8 M5.5 12 L8.5 9 L11.5 12" fill="none" stroke="#1f4f9c" stroke-width="1.4"/></svg>
<div style="left:1092px;top:606px;width:230px;height:77px;background:#f1f4fa;"></div>
<div style="left:1092px;top:683px;width:230px;height:1px;background:#dde2ec;"></div>
<div style="left:1092px;top:606px;width:230px;height:24px;background:linear-gradient(90deg,#ffffff 0%,#fbfcfe 40%,#dde4f2 100%);"></div>
<span style="left:1105px;top:610.84px;line-height:16px;font-size:12px;color:#2f6cb4;font-weight:bold;transform:scaleX(0.9293);">Circle</span>
<svg style="left:1299px;top:608px;" width="17" height="17" viewBox="0 0 17 17"><circle cx="8.5" cy="8.5" r="7.5" fill="#fbfcfe" stroke="#c3cfe3"/><path d="M5.5 8 L8.5 5 L11.5 8 M5.5 12 L8.5 9 L11.5 12" fill="none" stroke="#1f4f9c" stroke-width="1.4"/></svg>
<div style="left:1131px;top:210px;width:28px;height:28px;background:#fdb86c;border:1px solid #0a0a7a;"></div>
<div style="left:1159px;top:210px;width:28px;height:28px;background:#fdb86c;border:1px solid #0a0a7a;"></div>
<div style="left:1215px;top:210px;width:28px;height:28px;background:#fdb86c;border:1px solid #0a0a7a;"></div>
<div style="left:1271px;top:210px;width:28px;height:28px;background:#fdb86c;border:1px solid #0a0a7a;"></div>
<div style="left:1103px;top:266px;width:28px;height:28px;background:#fdb86c;border:1px solid #0a0a7a;"></div>
<div style="left:1131px;top:266px;width:28px;height:28px;background:#fdb86c;border:1px solid #0a0a7a;"></div>
<div style="left:1159px;top:266px;width:28px;height:28px;background:#fdb86c;border:1px solid #0a0a7a;"></div>
<svg style="left:1109px;top:215px;" width="16" height="16" viewBox="0 0 16 16"><path d="M3.5 1.5 h5" fill="none" stroke="#222" stroke-width="1" stroke-dasharray="1 1"/><path d="M4 5 L8 2.5 L13 6 Q14.5 9 12 11 L8.5 12.5 Q6 12.5 4.5 10 Z" fill="#fff" stroke="#222" stroke-width="1" /><path d="M5 5.5 L8.5 9 M8.5 9 L12 6.5" fill="none" stroke="#888" stroke-width="0.8" /><path d="M0.5 11.5 l2.5 2.5 M3 11.5 l-2.5 2.5" fill="none" stroke="#e02424" stroke-width="0.9" /><path d="M12.5 0.5 l1.3 1.8 l1.3 -1.8 M13.8 2.3 v2" fill="none" stroke="#e02424" stroke-width="0.9" /></svg>
<svg style="left:1137px;top:215px;" width="16" height="16" viewBox="0 0 16 16"><rect x="0" y="0" width="16" height="16" fill="#0a0a0a"/><rect x="1" y="1" width="1.6" height="1.6" fill="#7aa0e0"/><rect x="11" y="1" width="1.6" height="1.6" fill="#7aa0e0"/><rect x="1" y="10.5" width="1.6" height="1.6" fill="#7aa0e0"/><rect x="13.5" y="9.5" width="1.6" height="1.6" fill="#7aa0e0"/><path d="M3.5 3.5 h4 v4 h-4 z M6.5 6 h4 v4 h-4 z" fill="#0a0a0a" stroke="#fff" stroke-width="1.2" /><path d="M5.5 10.5 L9.5 15 L13.5 9.5" fill="none" stroke="#e02424" stroke-width="1.8" /></svg>
<svg style="left:1165px;top:215px;" width="16" height="16" viewBox="0 0 16 16"><path d="M1.5 10.5 L11 2.5" fill="none" stroke="#111" stroke-width="1" /><path d="M7 6 L15 14" fill="none" stroke="#8a8070" stroke-width="1" /><rect x="5.5" y="4.5" width="2" height="2" fill="#fff6f2" stroke="#e02424" stroke-width="1"/><rect x="10.5" y="0.5" width="2" height="2" fill="#f0e0c0" stroke="#333" stroke-width="1"/></svg>
<svg style="left:1193px;top:215px;" width="16" height="16" viewBox="0 0 16 16"><path d="M1 14 L15 3" fill="none" stroke="#333" stroke-width="1" /><rect x="4.5" y="10.5" width="2" height="2" fill="#fff6f2" stroke="#e02424" stroke-width="1"/><rect x="10.5" y="4.5" width="2" height="2" fill="#fff6f2" stroke="#e02424" stroke-width="1"/></svg>
<svg style="left:1221px;top:215px;" width="16" height="16" viewBox="0 0 16 16"><path d="M13.5 8 A6 6 0 1 0 6 13.5" fill="none" stroke="#111" stroke-width="1.2" /><rect x="6.5" y="7.5" width="2" height="2" fill="#fff6f2" stroke="#e02424" stroke-width="1"/></svg>
<svg style="left:1249px;top:215px;" width="16" height="16" viewBox="0 0 16 16"><path d="M1.5 4.5 h10 v10 h-10 z M1.5 4.5 l3 -3 h10 l-3 3 M14.5 1.5 v10 l-3 3" fill="none" stroke="#111" stroke-width="1.1" /><path d="M4.5 1.5 v10 h10 M4.5 11.5 l-3 3" fill="none" stroke="#999" stroke-width="0.7" /><path d="M5 6.5 h5 v5 h-5 z" fill="#f8e0e4" stroke="#c03050" stroke-width="1" /><path d="M6.7 8.2 h1.6 v1.6 h-1.6 z" fill="none" stroke="#c03050" stroke-width="0.8" /></svg>
<svg style="left:1277px;top:215px;" width="16" height="16" viewBox="0 0 16 16"><circle cx="8" cy="8" r="6.4" fill="none" stroke="#b01010" stroke-width="1.2" stroke-dasharray="2.2 1"/><path d="M8 0.5 V15.5 M0.5 8 H15.5" fill="none" stroke="#222" stroke-width="0.8" stroke-dasharray="1.2 1"/><circle cx="8" cy="8" r="6.4" fill="none" stroke="#222" stroke-width=".5" stroke-dasharray="1 2.2"/><path d="M6.5 0.5 l1.5 2 l1.5 -2 M6.5 15.5 l1.5 -2 l1.5 2" fill="none" stroke="#b01010" stroke-width="0.9" /></svg>
<svg style="left:1109px;top:243px;" width="16" height="16" viewBox="0 0 16 16"><path d="M1.5 2 L14 14 M14 2 L1.5 14" fill="none" stroke="#111" stroke-width="1.1" /><rect x="6.5" y="6.5" width="2" height="2" fill="#fff6f2" stroke="#e02424" stroke-width="1"/></svg>
<svg style="left:1137px;top:243px;" width="16" height="16" viewBox="0 0 16 16"><rect x="1.0" y="1.0" width="1" height="1" fill="#111"/><rect x="1.0" y="4.6" width="1" height="1" fill="#c02020"/><rect x="1.0" y="8.2" width="1" height="1" fill="#111"/><rect x="1.0" y="11.8" width="1" height="1" fill="#c02020"/><rect x="4.6" y="1.0" width="1" height="1" fill="#c02020"/><rect x="4.6" y="4.6" width="1" height="1" fill="#111"/><rect x="4.6" y="8.2" width="1" height="1" fill="#c02020"/><rect x="4.6" y="11.8" width="1" height="1" fill="#111"/><rect x="8.2" y="1.0" width="1" height="1" fill="#111"/><rect x="8.2" y="4.6" width="1" height="1" fill="#c02020"/><rect x="8.2" y="8.2" width="1" height="1" fill="#111"/><rect x="8.2" y="11.8" width="1" height="1" fill="#c02020"/><rect x="11.8" y="1.0" width="1" height="1" fill="#c02020"/><rect x="11.8" y="4.6" width="1" height="1" fill="#111"/><rect x="11.8" y="8.2" width="1" height="1" fill="#c02020"/><rect x="11.8" y="11.8" width="1" height="1" fill="#111"/><rect x="12.5" y="12.5" width="2" height="2" fill="#fff6f2" stroke="#e02424" stroke-width="1"/></svg>
<svg style="left:1165px;top:243px;" width="16" height="16" viewBox="0 0 16 16"><path d="M1.5 8 L6.5 3 L11 8 L6.5 12.5 Z" fill="none" stroke="#222" stroke-width="1" /><path d="M7 8 L14 14.5" fill="none" stroke="#8a8070" stroke-width="1" /><rect x="5.5" y="6.5" width="2" height="2" fill="#fff6f2" stroke="#e02424" stroke-width="1"/><rect x="11.5" y="1.5" width="2" height="2" fill="#dde" stroke="#889" stroke-width="1"/></svg>
<svg style="left:1193px;top:243px;" width="16" height="16" viewBox="0 0 16 16"><path d="M1 14 Q3 6 13 1.5" fill="none" stroke="#111" stroke-width="1.1" /><path d="M5 15.5 V9 L15 4" fill="none" stroke="#111" stroke-width="1.1" /><rect x="6.5" y="5.5" width="2" height="2" fill="#fff6f2" stroke="#e02424" stroke-width="1"/></svg>
<svg style="left:1221px;top:243px;" width="16" height="16" viewBox="0 0 16 16"><rect x="0" y="0" width="16" height="16" fill="#0a0a0a"/><rect x="1" y="1" width="1.6" height="1.6" fill="#7aa0e0"/><rect x="11" y="1" width="1.6" height="1.6" fill="#7aa0e0"/><rect x="1" y="10.5" width="1.6" height="1.6" fill="#7aa0e0"/><rect x="13.5" y="9.5" width="1.6" height="1.6" fill="#7aa0e0"/><path d="M3.5 3.5 h4 v4 h-4 z M6.5 6 h4 v4 h-4 z" fill="#0a0a0a" stroke="#fff" stroke-width="1.2" /><path d="M5.5 10.5 L9.5 15 L13.5 9.5" fill="none" stroke="#e02424" stroke-width="1.8" /></svg>
<svg style="left:1249px;top:243px;" width="16" height="16" viewBox="0 0 16 16"><path d="M1.5 8.5 H15" fill="none" stroke="#111" stroke-width="1.3" /><path d="M8 5 V14" fill="none" stroke="#111" stroke-width="1.1" /><path d="M6 1.5 l4 3.5 M10 1.5 l-4 3.5 M6 3.2 h4" fill="none" stroke="#e02424" stroke-width="1.1" /><rect x="6.7" y="12.5" width="2.8" height="3.5" fill="#ffd0d0" stroke="#e02424" stroke-width="1"/></svg>
<svg style="left:1277px;top:243px;" width="16" height="16" viewBox="0 0 16 16"><path d="M8 0.5 V15.5 M0.5 8 H15.5 M2.5 2.5 L13.5 13.5 M13.5 2.5 L2.5 13.5" fill="none" stroke="#8a8a8a" stroke-width="1" /><path d="M13 1.5 l1.2 1.5 l1.3 -2" fill="none" stroke="#e02424" stroke-width="1.1" /></svg>
<svg style="left:1109px;top:271px;" width="16" height="16" viewBox="0 0 16 16"><path d="M4.5 10 V6 A3.5 3.8 0 0 1 11.5 6 V10" fill="none" stroke="#0a0a0a" stroke-width="3" /><path d="M8 11.5 L4 16 M8 11.5 L12 16" fill="none" stroke="#111" stroke-width="1" /><rect x="6.5" y="10.5" width="2" height="2" fill="#fff6f2" stroke="#e02424" stroke-width="1"/></svg>
<svg style="left:1137px;top:271px;" width="16" height="16" viewBox="0 0 16 16"><path d="M4.5 3 H11 V8" fill="none" stroke="#111" stroke-width="1" stroke-dasharray="1.2 1.2"/><path d="M4.5 4 V15.5" fill="none" stroke="#111" stroke-width="1.1" /><path d="M11 9.5 L15 14.5" fill="none" stroke="#111" stroke-width="1.1" /><rect x="3.5" y="1.5" width="2" height="2" fill="#fff6f2" stroke="#e02424" stroke-width="1"/><rect x="10.5" y="8.5" width="2" height="2" fill="#fff6f2" stroke="#e02424" stroke-width="1"/></svg>
<svg style="left:1165px;top:271px;" width="16" height="16" viewBox="0 0 16 16"><path d="M8 0.5 L5.5 6 M8 0.5 L10.5 6" fill="none" stroke="#111" stroke-width="1" stroke-dasharray="1.2 1.2"/><path d="M5 8 L2 15 M11 8 L14 15" fill="none" stroke="#111" stroke-width="1.2" /><rect x="4.5" y="6.5" width="2" height="2" fill="#fff6f2" stroke="#e02424" stroke-width="1"/><rect x="9.5" y="6.5" width="2" height="2" fill="#fff6f2" stroke="#e02424" stroke-width="1"/></svg>
<svg style="left:1109px;top:343px;" width="16" height="16" viewBox="0 0 16 16"><path d="M3 13 L13 3" fill="none" stroke="#111" stroke-width="1.1" /><rect x="2.5" y="12.5" width="2" height="2" fill="#ffffff" stroke="#2222c4" stroke-width="1"/><rect x="12.5" y="2.5" width="2" height="2" fill="#ffffff" stroke="#2222c4" stroke-width="1"/></svg>
<svg style="left:1137px;top:343px;" width="16" height="16" viewBox="0 0 16 16"><path d="M1.5 11.5 L11.5 2 M6.5 6.5 L13.5 13" fill="none" stroke="#111" stroke-width="1" /><rect x="5.5" y="5.5" width="2" height="2" fill="#f0f0f0" stroke="#555" stroke-width="1"/><rect x="12.5" y="12.5" width="2" height="2" fill="#999" stroke="#444" stroke-width="1"/></svg>
<svg style="left:1165px;top:343px;" width="16" height="16" viewBox="0 0 16 16"><path d="M0.5 11 L11.5 0.5 M5.5 15.5 L15.5 6" fill="none" stroke="#111" stroke-width="1" /><rect x="4.5" y="4.5" width="2" height="2" fill="#f0f0f0" stroke="#555" stroke-width="1"/><rect x="8.5" y="10.5" width="2" height="2" fill="#f0f0f0" stroke="#555" stroke-width="1"/></svg>
<svg style="left:1193px;top:343px;" width="16" height="16" viewBox="0 0 16 16"><circle cx="6.5" cy="9.5" r="5.3" fill="none" stroke="#111" stroke-width="1.2"/><path d="M4.5 14.8 h4" fill="none" stroke="#111" stroke-width="2" /><path d="M6 1.5 L15.5 11" fill="none" stroke="#111" stroke-width="1" /><rect x="8.5" y="4.5" width="2" height="2" fill="#f0f0f0" stroke="#555" stroke-width="1"/></svg>
<svg style="left:1221px;top:343px;" width="16" height="16" viewBox="0 0 16 16"><path d="M1 2 Q7 2.5 8 8 Q7.5 13 4 15" fill="none" stroke="#111" stroke-width="1.1" /><path d="M8 8 L14.5 13" fill="none" stroke="#111" stroke-width="1.1" /><path d="M3 15 h2.5" fill="none" stroke="#111" stroke-width="2" /><rect x="6.5" y="3.5" width="2" height="2" fill="#f0f0f0" stroke="#555" stroke-width="1"/><rect x="13.5" y="12.5" width="2" height="2" fill="#f0f0f0" stroke="#555" stroke-width="1"/></svg>
<svg style="left:1249px;top:343px;" width="16" height="16" viewBox="0 0 16 16"><path d="M1 1.5 Q8 2.5 8 8 Q7.5 13.5 2 15" fill="none" stroke="#111" stroke-width="1.3" /><path d="M5.5 3 L15 12" fill="none" stroke="#111" stroke-width="1" /><path d="M1 15.2 h3" fill="none" stroke="#111" stroke-width="2" /><rect x="5.5" y="2.5" width="2" height="2" fill="#f0f0f0" stroke="#555" stroke-width="1"/><rect x="14.5" y="11.5" width="2" height="2" fill="#eee" stroke="#aaa" stroke-width="1"/></svg>
<svg style="left:1277px;top:343px;" width="16" height="16" viewBox="0 0 16 16"><path d="M1 2 H4.5 Q8 3 5 7.5 H1.5" fill="none" stroke="#111" stroke-width="1.1" /><path d="M4 3 L14 11" fill="none" stroke="#111" stroke-width="1.1" /><path d="M7.5 15.5 V11 Q9 8 13.5 10 V15.5" fill="none" stroke="#111" stroke-width="1.1" /><rect x="4.5" y="2.5" width="2" height="2" fill="#f0f0f0" stroke="#555" stroke-width="1"/><rect x="12.5" y="9.5" width="2" height="2" fill="#f0f0f0" stroke="#555" stroke-width="1"/></svg>
<svg style="left:1109px;top:371px;" width="16" height="16" viewBox="0 0 16 16"><path d="M1 8.5 Q6 8 8.5 4.5 Q9 3 8.5 1" fill="none" stroke="#111" stroke-width="1.1" /><path d="M6 15 Q6 10.5 9 8 H14.5" fill="none" stroke="#111" stroke-width="1.1" /><rect x="3.5" y="7.5" width="2" height="2" fill="#ffffff" stroke="#2222c4" stroke-width="1"/><rect x="8.5" y="3.5" width="2" height="2" fill="#ffffff" stroke="#2222c4" stroke-width="1"/></svg>
<svg style="left:1137px;top:371px;" width="16" height="16" viewBox="0 0 16 16"><path d="M8 13 V2.5 M8 13 L2.5 7.5 M8 13 L13.5 7.5" fill="none" stroke="#111" stroke-width="1.1" /><rect x="6.5" y="0.5" width="2" height="2" fill="#ffffff" stroke="#2222c4" stroke-width="1"/><rect x="1.5" y="6.5" width="2" height="2" fill="#ffffff" stroke="#2222c4" stroke-width="1"/><rect x="12.5" y="6.5" width="2" height="2" fill="#ffffff" stroke="#2222c4" stroke-width="1"/><rect x="6.5" y="12.5" width="2" height="2" fill="#2222c4" stroke="#2222c4" stroke-width="1"/></svg>
<svg style="left:1109px;top:443px;" width="16" height="16" viewBox="0 0 16 16"><path d="M1.5 12.5 H9.5 A4.3 4.3 0 1 0 9 4.3" fill="none" stroke="#111" stroke-width="1.1" /><rect x="0.5" y="11.5" width="2" height="2" fill="#ffffff" stroke="#2222c4" stroke-width="1"/><rect x="8.5" y="11.5" width="2" height="2" fill="#ffffff" stroke="#2222c4" stroke-width="1"/><rect x="8.5" y="2.5" width="2" height="2" fill="#ffffff" stroke="#2222c4" stroke-width="1"/></svg>
<svg style="left:1137px;top:443px;" width="16" height="16" viewBox="0 0 16 16"><defs><linearGradient id="gpf" x1="0" y1="0" x2="1" y2="1"><stop offset="0" stop-color="#fff"/><stop offset="1" stop-color="#b8c4c8"/></linearGradient></defs><path d="M8 2.5 L14.2 7 L11.8 14 H4.2 L1.8 7 Z" fill="url(#gpf)" stroke="#111" stroke-width="1.2" /></svg>
<svg style="left:1165px;top:443px;" width="16" height="16" viewBox="0 0 16 16"><path d="M2.5 4.5 H13.5 V12 H3 Z" fill="url(#gpf)" stroke="#111" stroke-width="1.2" /><rect x="1.5" y="3.5" width="2" height="2" fill="#ffffff" stroke="#2222c4" stroke-width="1"/><rect x="12.5" y="10.5" width="2" height="2" fill="#ffffff" stroke="#2222c4" stroke-width="1"/></svg>
<svg style="left:1193px;top:443px;" width="16" height="16" viewBox="0 0 16 16"><path d="M1.5 7.5 L8 1.5 L14.5 7.5 M3.5 14.5 L8 10 L12.5 14.5" fill="none" stroke="#111" stroke-width="1.1" /><rect x="6.5" y="4.5" width="2" height="2" fill="#ffffff" stroke="#2222c4" stroke-width="1"/><rect x="1.5" y="8.5" width="2" height="2" fill="#ffffff" stroke="#2222c4" stroke-width="1"/><rect x="12.5" y="8.5" width="2" height="2" fill="#ffffff" stroke="#2222c4" stroke-width="1"/></svg>
<svg style="left:1221px;top:443px;" width="16" height="16" viewBox="0 0 16 16"><path d="M2 2.5 H9 L14.5 7.5 V14 H7 L2 8.5 Z" fill="#fff" stroke="#0a0a3a" stroke-width="2.6" /><ellipse cx="8.5" cy="8.3" rx="2.6" ry="2" fill="#eef0ff" stroke="#111" stroke-width="1"/><rect x="0.5" y="1.5" width="2" height="2" fill="#fff" stroke="#2222c4" stroke-width="1"/><rect x="4.5" y="1.5" width="2" height="2" fill="#fff" stroke="#2222c4" stroke-width="1"/><rect x="0.5" y="6.5" width="2" height="2" fill="#fff" stroke="#2222c4" stroke-width="1"/><rect x="8.5" y="2.5" width="2" height="2" fill="#fff" stroke="#2222c4" stroke-width="1"/><rect x="13.5" y="6.5" width="2" height="2" fill="#fff" stroke="#2222c4" stroke-width="1"/><rect x="13.5" y="12.5" width="2" height="2" fill="#fff" stroke="#2222c4" stroke-width="1"/><rect x="9.5" y="12.5" width="2" height="2" fill="#fff" stroke="#2222c4" stroke-width="1"/><rect x="5.5" y="12.5" width="2" height="2" fill="#fff" stroke="#2222c4" stroke-width="1"/></svg>
<svg style="left:1249px;top:443px;" width="16" height="16" viewBox="0 0 16 16"><path d="M5 1.5 H11 L15 5.5 V11 L11 14.5 H5 L1.5 11 V5.5 Z" fill="url(#gpf)" stroke="#111" stroke-width="1.1" /><circle cx="8" cy="8" r="3.6" fill="#eef0f8" stroke="#111" stroke-width="1"/><rect x="6.5" y="6.5" width="2" height="2" fill="#ffffff" stroke="#2222c4" stroke-width="1"/><rect x="1.5" y="0.5" width="2" height="2" fill="#ffffff" stroke="#2222c4" stroke-width="1"/><path d="M5 15.2 h6.5" fill="none" stroke="#111" stroke-width="2" /></svg>
<svg style="left:1277px;top:443px;" width="16" height="16" viewBox="0 0 16 16"><path d="M1.5 1.5 H14.5 V14 H1.5 Z" fill="url(#gpf)" stroke="#111" stroke-width="1.2" /><path d="M5 5 h7 v6 h-7 z" fill="#f4f6fa" stroke="#111" stroke-width="1.2" /><path d="M1 15 H15" fill="none" stroke="#111" stroke-width="2" /><rect x="2.5" y="2.5" width="2" height="2" fill="#ffffff" stroke="#2222c4" stroke-width="1"/><rect x="12.5" y="10.5" width="2" height="2" fill="#ffffff" stroke="#2222c4" stroke-width="1"/></svg>
<svg style="left:1109px;top:515px;" width="16" height="16" viewBox="0 0 16 16"><path d="M2.5 11 Q3 3 12 2.5" fill="none" stroke="#111" stroke-width="1.2" /><rect x="12.5" y="1.5" width="2" height="2" fill="#ffffff" stroke="#2222c4" stroke-width="1"/><rect x="12.5" y="12.5" width="2" height="2" fill="#ffffff" stroke="#2222c4" stroke-width="1"/><path d="M2.5 10.5 L4.5 12.5 L2.5 14.5 L0.5 12.5 Z" fill="#fff" stroke="#2222c4" stroke-width="1"/><path d="M2.5 9.0 V10.5 M2.5 14.5 V16.0 M-1.0 12.5 H0.5 M4.5 12.5 H6.0" fill="none" stroke="#2222c4" stroke-width="0.9" /></svg>
<svg style="left:1137px;top:515px;" width="16" height="16" viewBox="0 0 16 16"><path d="M2.5 11 Q3 3 12 2.5" fill="none" stroke="#111" stroke-width="1.2" /><path d="M8.5 12.5 Q9 8.5 13 8" fill="none" stroke="#a05020" stroke-width="1.3" /><rect x="12.5" y="12.5" width="2" height="2" fill="#ffffff" stroke="#2222c4" stroke-width="1"/><path d="M2.5 10.5 L4.5 12.5 L2.5 14.5 L0.5 12.5 Z" fill="#fff" stroke="#2222c4" stroke-width="1"/><path d="M2.5 9.0 V10.5 M2.5 14.5 V16.0 M-1.0 12.5 H0.5 M4.5 12.5 H6.0" fill="none" stroke="#2222c4" stroke-width="0.9" /></svg>
<svg style="left:1165px;top:515px;" width="16" height="16" viewBox="0 0 16 16"><path d="M2.5 11 Q3 3 12 2.5" fill="none" stroke="#111" stroke-width="1.2" /><path d="M4.5 12 L12.5 3" fill="none" stroke="#333" stroke-width="0.9" /><rect x="12.5" y="12.5" width="2" height="2" fill="#ffffff" stroke="#2222c4" stroke-width="1"/><path d="M2.5 10.5 L4.5 12.5 L2.5 14.5 L0.5 12.5 Z" fill="#fff" stroke="#2222c4" stroke-width="1"/><path d="M2.5 9.0 V10.5 M2.5 14.5 V16.0 M-1.0 12.5 H0.5 M4.5 12.5 H6.0" fill="none" stroke="#2222c4" stroke-width="0.9" /></svg>
<svg style="left:1193px;top:515px;" width="16" height="16" viewBox="0 0 16 16"><path d="M2.5 11 Q3 3 12 2.5" fill="none" stroke="#111" stroke-width="1.2" /><path d="M8.5 12.5 Q9 8.5 13 8 V12.5 Z" fill="#f8e0e4" stroke="#c07080" stroke-width="1" /><path d="M8.5 12.5 Q9 8.5 13 8" fill="none" stroke="#a03020" stroke-width="1.2" /><rect x="12.5" y="1.5" width="2" height="2" fill="#ffffff" stroke="#2222c4" stroke-width="1"/><path d="M2.5 10.5 L4.5 12.5 L2.5 14.5 L0.5 12.5 Z" fill="#fff" stroke="#2222c4" stroke-width="1"/><path d="M2.5 9.0 V10.5 M2.5 14.5 V16.0 M-1.0 12.5 H0.5 M4.5 12.5 H6.0" fill="none" stroke="#2222c4" stroke-width="0.9" /></svg>
<svg style="left:1221px;top:515px;" width="16" height="16" viewBox="0 0 16 16"><path d="M3 11 Q4 3.5 12 2.5" fill="none" stroke="#111" stroke-width="1.2" /><path d="M2.5 11 V3" fill="none" stroke="#a03020" stroke-width="1.2" /><path d="M2.5 1.5 l-1.8 3 h3.6 z" fill="#a03020"/><rect x="12.5" y="1.5" width="2" height="2" fill="#ffffff" stroke="#2222c4" stroke-width="1"/><path d="M2.5 10.5 L4.5 12.5 L2.5 14.5 L0.5 12.5 Z" fill="#fff" stroke="#2222c4" stroke-width="1"/><path d="M2.5 9.0 V10.5 M2.5 14.5 V16.0 M-1.0 12.5 H0.5 M4.5 12.5 H6.0" fill="none" stroke="#2222c4" stroke-width="0.9" /></svg>
<svg style="left:1249px;top:515px;" width="16" height="16" viewBox="0 0 16 16"><path d="M2.5 11 Q3 3 12 2.5" fill="none" stroke="#111" stroke-width="1.2" /><path d="M13 4.5 V12.5" fill="none" stroke="#b02020" stroke-width="1.3" /><rect x="12.5" y="1.5" width="2" height="2" fill="#ffffff" stroke="#2222c4" stroke-width="1"/><path d="M2.5 10.5 L4.5 12.5 L2.5 14.5 L0.5 12.5 Z" fill="#fff" stroke="#2222c4" stroke-width="1"/><path d="M2.5 9.0 V10.5 M2.5 14.5 V16.0 M-1.0 12.5 H0.5 M4.5 12.5 H6.0" fill="none" stroke="#2222c4" stroke-width="0.9" /></svg>
<svg style="left:1277px;top:515px;" width="16" height="16" viewBox="0 0 16 16"><path d="M2.5 12 Q3 3.5 13 2.5" fill="none" stroke="#111" stroke-width="1.2" /><rect x="1.5" y="12.5" width="2" height="2" fill="#ffffff" stroke="#2222c4" stroke-width="1"/><rect x="4.5" y="4.5" width="2" height="2" fill="#ffffff" stroke="#2222c4" stroke-width="1"/><rect x="12.5" y="1.5" width="2" height="2" fill="#ffffff" stroke="#2222c4" stroke-width="1"/></svg>
<svg style="left:1109px;top:543px;" width="16" height="16" viewBox="0 0 16 16"><text x="0" y="6.5" font-family="Liberation Sans" font-weight="bold" font-size="7" fill="#111">1</text><text x="0" y="16" font-family="Liberation Sans" font-weight="bold" font-size="7" fill="#111">2</text><text x="7" y="11.5" font-family="Liberation Sans" font-weight="bold" font-size="7" fill="#111">3</text><path d="M6.5 2.5 Q13.5 4 13 9 Q12 13.5 6.5 14" fill="none" stroke="#111" stroke-width="1" /><rect x="4.5" y="1.5" width="2" height="2" fill="#ffffff" stroke="#2222c4" stroke-width="1"/><rect x="4.5" y="12.5" width="2" height="2" fill="#2222c4" stroke="#2222c4" stroke-width="1"/><rect x="11.5" y="7.5" width="2" height="2" fill="#ffffff" stroke="#2222c4" stroke-width="1"/></svg>
<svg style="left:1137px;top:543px;" width="16" height="16" viewBox="0 0 16 16"><path d="M2.5 11 Q3 3 12 2.5" fill="none" stroke="#111" stroke-width="1.2" /><path d="M13 4 V11 M4 13 H10" fill="none" stroke="#667" stroke-width="0.8" stroke-dasharray="1 1.2"/><rect x="12.5" y="1.5" width="2" height="2" fill="#ffffff" stroke="#2222c4" stroke-width="1"/><rect x="1.5" y="12.5" width="2" height="2" fill="#ffffff" stroke="#2222c4" stroke-width="1"/><path d="M12.5 10.5 L14.5 12.5 L12.5 14.5 L10.5 12.5 Z" fill="#fff" stroke="#2222c4" stroke-width="1"/><path d="M12.5 9.0 V10.5 M12.5 14.5 V16.0 M9.0 12.5 H10.5 M14.5 12.5 H16.0" fill="none" stroke="#2222c4" stroke-width="0.9" /></svg>
<svg style="left:1165px;top:543px;" width="16" height="16" viewBox="0 0 16 16"><path d="M2.5 11 Q3 3 12 2.5" fill="none" stroke="#111" stroke-width="1.2" /><path d="M6.5 12.5 Q7.5 8 12 7" fill="none" stroke="#a05020" stroke-width="1.3" /><path d="M12.5 4 V10" fill="none" stroke="#e08090" stroke-width="0.8" /><rect x="1.5" y="12.5" width="2" height="2" fill="#ffffff" stroke="#2222c4" stroke-width="1"/><path d="M12.5 10.5 L14.5 12.5 L12.5 14.5 L10.5 12.5 Z" fill="#fff" stroke="#2222c4" stroke-width="1"/><path d="M12.5 9.0 V10.5 M12.5 14.5 V16.0 M9.0 12.5 H10.5 M14.5 12.5 H16.0" fill="none" stroke="#2222c4" stroke-width="0.9" /></svg>
<svg style="left:1193px;top:543px;" width="16" height="16" viewBox="0 0 16 16"><path d="M2.5 11 Q3 3 12 2.5" fill="none" stroke="#111" stroke-width="1.2" /><path d="M4 12 L12.5 3" fill="none" stroke="#333" stroke-width="0.9" /><rect x="1.5" y="12.5" width="2" height="2" fill="#ffffff" stroke="#2222c4" stroke-width="1"/><path d="M12.5 10.5 L14.5 12.5 L12.5 14.5 L10.5 12.5 Z" fill="#fff" stroke="#2222c4" stroke-width="1"/><path d="M12.5 9.0 V10.5 M12.5 14.5 V16.0 M9.0 12.5 H10.5 M14.5 12.5 H16.0" fill="none" stroke="#2222c4" stroke-width="0.9" /></svg>
<svg style="left:1221px;top:543px;" width="16" height="16" viewBox="0 0 16 16"><path d="M1.5 12 A6.5 6.5 0 0 1 14.5 9" fill="none" stroke="#111" stroke-width="1.2" /><path d="M4.2 12 A4 4 0 0 1 12 9.5" fill="none" stroke="#111" stroke-width="1.2" /><rect x="1.5" y="12.5" width="2" height="2" fill="#ffffff" stroke="#2222c4" stroke-width="1"/><rect x="6.5" y="7.5" width="2" height="2" fill="#ffffff" stroke="#2222c4" stroke-width="1"/><rect x="13.5" y="7.5" width="2" height="2" fill="#ffffff" stroke="#2222c4" stroke-width="1"/></svg>
<svg style="left:1249px;top:543px;" width="16" height="16" viewBox="0 0 16 16"><path d="M2.5 8 A5.7 5.7 0 1 0 13.5 4.5" fill="none" stroke="#111" stroke-width="1.2" /><path d="M4 7.5 H8 L12.5 3.5" fill="none" stroke="#667" stroke-width="0.8" stroke-dasharray="1 1.2"/><rect x="1.5" y="6.5" width="2" height="2" fill="#ffffff" stroke="#2222c4" stroke-width="1"/><rect x="12.5" y="1.5" width="2" height="2" fill="#ffffff" stroke="#2222c4" stroke-width="1"/></svg>
<svg style="left:1277px;top:543px;" width="16" height="16" viewBox="0 0 16 16"><path d="M2 13 A6.3 6.3 0 0 1 14 9" fill="none" stroke="#111" stroke-width="1.2" stroke-dasharray="5 1.5"/><path d="M8 2 l2 -1.5" fill="none" stroke="#111" stroke-width="1" /><path d="M3.5 13 L9 10 L13 10" fill="none" stroke="#778" stroke-width="0.8" stroke-dasharray="1 1.2"/><rect x="4.5" y="2.5" width="2" height="2" fill="#ffffff" stroke="#2222c4" stroke-width="1"/><rect x="12.5" y="8.5" width="2" height="2" fill="#ffffff" stroke="#2222c4" stroke-width="1"/><rect x="2.5" y="13.5" width="2" height="2" fill="#2222c4" stroke="#2222c4" stroke-width="1"/></svg>
<svg style="left:1109px;top:571px;" width="16" height="16" viewBox="0 0 16 16"><path d="M1 15 L12 3" fill="none" stroke="#111" stroke-width="1.1" /><path d="M2 2 L10 11" fill="none" stroke="#99a" stroke-width="0.7" stroke-dasharray="1 1.5"/><path d="M7 13.5 Q6 9.5 10 9.5" fill="none" stroke="#667" stroke-width="1" /><rect x="12.5" y="9.5" width="2" height="2" fill="#ffffff" stroke="#2222c4" stroke-width="1"/><rect x="8.5" y="13.5" width="2" height="2" fill="#ffffff" stroke="#2222c4" stroke-width="1"/><path d="M13 15 h1" fill="none" stroke="#667" stroke-width="1" /></svg>
<svg style="left:1137px;top:571px;" width="16" height="16" viewBox="0 0 16 16"><circle cx="9" cy="10" r="5.8" fill="none" stroke="#111" stroke-width="1.2" stroke-dasharray="6 1.5"/><path d="M2 4.5 L7 3" fill="none" stroke="#111" stroke-width="1" /><path d="M9 10 L13 6" fill="none" stroke="#aaa" stroke-width="0.9" stroke-dasharray="1 1"/><rect x="8.5" y="2.5" width="2" height="2" fill="#ffffff" stroke="#2222c4" stroke-width="1"/><rect x="2.5" y="10.5" width="2" height="2" fill="#ffffff" stroke="#2222c4" stroke-width="1"/><rect x="13.5" y="12.5" width="2" height="2" fill="#ffffff" stroke="#2222c4" stroke-width="1"/><path d="M0.5 9 l3 1" fill="none" stroke="#2222c4" stroke-width="1" /></svg>
<svg style="left:1165px;top:571px;" width="16" height="16" viewBox="0 0 16 16"><path d="M0.5 14.5 L12 2" fill="none" stroke="#111" stroke-width="1.1" /><circle cx="8.5" cy="10" r="2.8" fill="none" stroke="#667" stroke-width="1"/><path d="M6 16 V14 H11.5 V16" fill="none" stroke="#111" stroke-width="1.1" /><rect x="6.5" y="6.5" width="2" height="2" fill="#ffffff" stroke="#2222c4" stroke-width="1"/><rect x="12.5" y="8.5" width="2" height="2" fill="#ffffff" stroke="#2222c4" stroke-width="1"/><rect x="8.5" y="12.5" width="2" height="2" fill="#ffffff" stroke="#2222c4" stroke-width="1"/></svg>
<svg style="left:1193px;top:571px;" width="16" height="16" viewBox="0 0 16 16"><path d="M0.5 14.5 L12 2" fill="none" stroke="#111" stroke-width="1.1" /><circle cx="9" cy="10" r="2.8" fill="none" stroke="#889" stroke-width="1"/><path d="M6 16 V14 H11.5 V16" fill="none" stroke="#111" stroke-width="1.1" /><rect x="6.5" y="6.5" width="2" height="2" fill="#ffffff" stroke="#2222c4" stroke-width="1"/><rect x="8.5" y="12.5" width="2" height="2" fill="#ffffff" stroke="#2222c4" stroke-width="1"/></svg>
<svg style="left:1109px;top:643px;" width="16" height="16" viewBox="0 0 16 16"><defs><radialGradient id="gcf" cx=".4" cy=".35" r=".8"><stop offset="0" stop-color="#fff"/><stop offset="1" stop-color="#cfd8e0"/></radialGradient></defs><circle cx="8" cy="8" r="6.8" fill="url(#gcf)" stroke="#111" stroke-width="1.2"/><path d="M8 8.5 L12.5 4" fill="none" stroke="#111" stroke-width="1" /><path d="M5.5 15.5 h5" fill="none" stroke="#111" stroke-width="1.8" /><rect x="6.5" y="7.5" width="2" height="2" fill="#ffffff" stroke="#2222c4" stroke-width="1"/></svg>
<svg style="left:1137px;top:643px;" width="16" height="16" viewBox="0 0 16 16"><circle cx="8" cy="8.5" r="6.5" fill="url(#gcf)" stroke="#111" stroke-width="1.2"/><rect x="6.5" y="0.5" width="2" height="2" fill="#ffffff" stroke="#2222c4" stroke-width="1"/><rect x="6.5" y="14.5" width="2" height="2" fill="#2222c4" stroke="#2222c4" stroke-width="1"/></svg>
<svg style="left:1165px;top:643px;" width="16" height="16" viewBox="0 0 16 16"><circle cx="7.5" cy="8.5" r="6.5" fill="url(#gcf)" stroke="#111" stroke-width="1.2"/><rect x="6.5" y="0.5" width="2" height="2" fill="#ffffff" stroke="#2222c4" stroke-width="1"/><rect x="13.5" y="6.5" width="2" height="2" fill="#ffffff" stroke="#2222c4" stroke-width="1"/><rect x="6.5" y="14.5" width="2" height="2" fill="#ffffff" stroke="#2222c4" stroke-width="1"/></svg>
<svg style="left:1193px;top:643px;" width="16" height="16" viewBox="0 0 16 16"><path d="M1 2 Q8 10 1 15 M15 2 Q8 10 15 15" fill="none" stroke="#111" stroke-width="1" /><path d="M3 15.5 Q8 7 13 15.5" fill="none" stroke="#111" stroke-width="1" /><path d="M2.5 4 Q8 12 13.5 4" fill="none" stroke="#111" stroke-width="1" /><rect x="2.5" y="6.5" width="2" height="2" fill="#ffffff" stroke="#2222c4" stroke-width="1"/><rect x="12.5" y="6.5" width="2" height="2" fill="#ffffff" stroke="#2222c4" stroke-width="1"/><rect x="6.5" y="11.5" width="2" height="2" fill="#ffffff" stroke="#2222c4" stroke-width="1"/></svg>
<svg style="left:1221px;top:643px;" width="16" height="16" viewBox="0 0 16 16"><circle cx="8" cy="8.5" r="5.5" fill="url(#gcf)" stroke="#111" stroke-width="1.2"/><path d="M14.5 1.5 V15.5" fill="none" stroke="#111" stroke-width="1.2" /><path d="M6 1 L0.5 8 L5.5 15.5" fill="none" stroke="#111" stroke-width="1" stroke-dasharray="4 1"/><rect x="2.5" y="3.5" width="2" height="2" fill="#ffffff" stroke="#2222c4" stroke-width="1"/><rect x="2.5" y="11.5" width="2" height="2" fill="#ffffff" stroke="#2222c4" stroke-width="1"/><rect x="13.5" y="7.5" width="2" height="2" fill="#ffffff" stroke="#2222c4" stroke-width="1"/></svg>
<svg style="left:1249px;top:643px;" width="16" height="16" viewBox="0 0 16 16"><circle cx="8.5" cy="9.5" r="5.5" fill="url(#gcf)" stroke="#111" stroke-width="1.2"/><path d="M14.5 1.5 V15.5" fill="none" stroke="#111" stroke-width="1.2" /><path d="M0.5 8 L7 1" fill="none" stroke="#111" stroke-width="1.1" /><rect x="2.5" y="4.5" width="2" height="2" fill="#ffffff" stroke="#2222c4" stroke-width="1"/><rect x="7.5" y="8.5" width="2" height="2" fill="#ffffff" stroke="#2222c4" stroke-width="1"/><rect x="13.5" y="8.5" width="2" height="2" fill="#ffffff" stroke="#2222c4" stroke-width="1"/></svg>
<svg style="left:1277px;top:643px;" width="16" height="16" viewBox="0 0 16 16"><circle cx="8" cy="8.5" r="6.5" fill="url(#gcf)" stroke="#111" stroke-width="1.2"/><path d="M1 1.5 H15.5" fill="none" stroke="#111" stroke-width="1.3" /><path d="M8 2 V14" fill="none" stroke="#2222c4" stroke-width="0.8" stroke-dasharray="1 1"/><rect x="13.5" y="6.5" width="2" height="2" fill="#ffffff" stroke="#2222c4" stroke-width="1"/><rect x="6.5" y="14.5" width="2" height="2" fill="#2222c4" stroke="#2222c4" stroke-width="1"/></svg>
<svg style="left:1109px;top:671px;overflow:hidden;" width="16" height="11" viewBox="0 0 16 11"><circle cx="8" cy="8.5" r="4.5" fill="none" stroke="#111" stroke-width="1.1" stroke-dasharray="2 1"/><path d="M0.5 8 l2.5 -2 v4 z M15.5 8 l-2.5 -2 v4 z" fill="#111"/><rect x="7.4" y="8" width="1.3" height="1.3" fill="#111"/></svg>
<svg style="left:1137px;top:671px;overflow:hidden;" width="16" height="11" viewBox="0 0 16 11"><path d="M1.5 12 A6.5 6.5 0 0 1 14.5 10" fill="none" stroke="#111" stroke-width="1.2" /><path d="M4.2 12 A4 4 0 0 1 12 10" fill="none" stroke="#111" stroke-width="1.2" /><rect x="6.5" y="8.5" width="2" height="2" fill="#ffffff" stroke="#2222c4" stroke-width="1"/><rect x="10.5" y="8.5" width="2" height="2" fill="#ffffff" stroke="#2222c4" stroke-width="1"/><rect x="13.5" y="8.5" width="2" height="2" fill="#ffffff" stroke="#2222c4" stroke-width="1"/></svg>
<svg style="left:1098px;top:153px;" width="16" height="16" viewBox="0 0 16 16"><path d="M0.5 0.5 V11.5 L3.2 9 L5.2 13.3 L7 12.5 L5 8.3 H8.5 Z" fill="#fff" stroke="#000" stroke-width="1" /></svg>
<svg style="left:1117px;top:153px;" width="16" height="16" viewBox="0 0 16 16"><path d="M2 14 L10 2 M6 2 L12 13" fill="none" stroke="#9aa0b4" stroke-width="1.2" /><path d="M8 7 V15 L10 13.2 L11.5 16 L12.8 15.4 L11.4 12.6 H14 Z" fill="#e8eaf2" stroke="#9aa0b4" stroke-width="0.9" /></svg>
<svg style="left:1139px;top:152px;" width="16" height="16" viewBox="0 0 16 16"><circle cx="8.5" cy="8.5" r="7" fill="#b8bccb" stroke="#a4a9ba" stroke-width="1"/><path d="M4 11 Q4 4.5 11 5 M4 11 l3 -1 M4 11 l-1.2 -3" fill="none" stroke="#eceef5" stroke-width="1.6" /><path d="M13 6 Q14 12 7.5 12.5" fill="none" stroke="#d8dbe6" stroke-width="1.6" /></svg>
<svg style="left:1266px;top:152px;" width="16" height="16" viewBox="0 0 16 16"><path d="M3 8 L9 3 L15 9 L9 15 H3 Z" fill="#e83030" stroke="#a01818" stroke-width="1" /><path d="M5 2 L11 8" fill="none" stroke="#333" stroke-width="1.2" /><path d="M9 1 h5 v5" fill="#f4f4f4" stroke="#888" stroke-width="1" /><text x="10.5" y="6" font-size="5.5" font-weight="bold" fill="#333" font-family="Liberation Sans">1</text><path d="M1 9 Q0 13 2 15" fill="none" stroke="#c02020" stroke-width="1.5" /></svg>
<svg style="left:1279px;top:165px;" width="4" height="4" viewBox="0 0 4 4"><path d="M4 0 v4 h-4 z" fill="#000"/></svg>
<svg style="left:1302px;top:126px;" width="16" height="16" viewBox="0 0 16 16"><defs><radialGradient id="gpin" cx=".35" cy=".3" r=".8"><stop offset="0" stop-color="#fff"/><stop offset=".6" stop-color="#cfd3d8"/><stop offset="1" stop-color="#8e949c"/></radialGradient></defs><path d="M1 15 L6 10" fill="none" stroke="#5a5f68" stroke-width="1.3" /><ellipse cx="7" cy="9.5" rx="4.2" ry="3.6" fill="#c4c8ce" stroke="#6a6f78" stroke-width=".9"/><circle cx="10.5" cy="5.5" r="4.8" fill="url(#gpin)" stroke="#6a6f78" stroke-width=".9"/></svg>
<div style="left:0px;top:682px;width:1366px;height:26px;background:#f0f0f0;"></div>
<span style="left:9px;top:685.84px;line-height:16px;font-size:12px;color:#000;transform:scaleX(0.9672);">Show or hide rulers</span>
<div style="left:980px;top:685px;width:35px;height:22px;border:1px solid #c5c5c5;border-right-color:#fff;border-bottom-color:#fff;"></div>
<div style="left:1018px;top:685px;width:28px;height:22px;border:1px solid #c5c5c5;border-right-color:#fff;border-bottom-color:#fff;"></div>
<div style="left:1049px;top:685px;width:199px;height:22px;border:1px solid #c5c5c5;border-right-color:#fff;border-bottom-color:#fff;"></div>
<div style="left:1250px;top:685px;width:43px;height:22px;border:1px solid #c5c5c5;border-right-color:#fff;border-bottom-color:#fff;"></div>
<div style="left:1306px;top:685px;width:60px;height:22px;border:1px solid #c5c5c5;border-right-color:#fff;border-bottom-color:#fff;"></div>
<span style="left:984px;top:688.84px;line-height:16px;font-size:12px;color:#000;transform:scaleX(0.8872);">SNAP</span>
<span style="left:1021px;top:688.84px;line-height:16px;font-size:12px;color:#000;transform:scaleX(0.8623);">GEO</span>
<div style="left:1073px;top:687px;width:74px;height:19px;border:2px solid #222;border-right-width:1px;border-bottom-width:1px;background:#fff;"></div>
<div style="left:1169px;top:687px;width:74px;height:19px;border:2px solid #222;border-right-width:1px;border-bottom-width:1px;background:#fff;"></div>
<span style="left:1076px;top:688.34px;line-height:16px;font-size:12px;color:#999;transform:scaleX(0.8717);">-40,85 mm</span>
<span style="left:1172px;top:688.34px;line-height:16px;font-size:12px;color:#000;transform:scaleX(0.8681);">-8,65 mm</span>
<span style="left:1060px;top:692.69px;line-height:15px;font-size:11px;color:#222;transform:scaleX(0.9720);">±X</span>
<span style="left:1155px;top:692.69px;line-height:15px;font-size:11px;color:#222;transform:scaleX(0.9720);">±Y</span>
<svg style="left:1066px;top:686px;" width="7" height="7" viewBox="0 0 7 7"><rect x="0.5" y="0.5" width="6" height="6" fill="#fff" stroke="#222"/></svg>
<svg style="left:1162px;top:686px;" width="7" height="7" viewBox="0 0 7 7"><rect x="0.5" y="0.5" width="6" height="6" fill="#fff" stroke="#222"/></svg>
<span style="left:1252px;top:685.84px;line-height:16px;font-size:12px;color:#000;transform:scaleX(0.9571);">66%</span>
<span style="left:1309px;top:685.84px;line-height:16px;font-size:12px;color:#000;transform:scaleX(0.9324);">21:32</span>
<div style="left:81px;top:44px;width:193px;height:343px;background:#f1f1f1;border:1px solid #979797;box-shadow:4px 4px 3px -1px rgba(0,0,0,.6);"></div>
<div style="left:106px;top:46px;width:1px;height:339px;background:#e2e3e3;"></div>
<div style="left:107px;top:46px;width:1px;height:339px;background:#fff;"></div>
<span style="left:111px;top:48.84px;line-height:16px;font-size:12px;color:#000;transform:scaleX(0.9430);">Redraw</span>
<span style="left:241px;top:48.84px;line-height:16px;font-size:12px;color:#000;transform:scaleX(0.7848);">F5</span>
<span style="left:111px;top:69.84px;line-height:16px;font-size:12px;color:#000;transform:scaleX(0.9708);">Model Space</span>
<span style="left:192px;top:69.84px;line-height:16px;font-size:12px;color:#000;transform:scaleX(1.0584);">Ctrl+Alt+M</span>
<div style="left:109px;top:91px;width:163px;height:1px;background:#e0e0e0;"></div>
<div style="left:109px;top:92px;width:163px;height:1px;background:#fff;"></div>
<span style="left:111px;top:98.84px;line-height:16px;font-size:12px;color:#000;transform:scaleX(1.0102);">Zoom</span>
<svg style="left:260px;top:103px;" width="4" height="7" viewBox="0 0 4 7"><path d="M0 0 v7 l4 -3.5 z" fill="#000"/></svg>
<span style="left:111px;top:119.84px;line-height:16px;font-size:12px;color:#000;transform:scaleX(0.8895);">Pan</span>
<svg style="left:260px;top:124px;" width="4" height="7" viewBox="0 0 4 7"><path d="M0 0 v7 l4 -3.5 z" fill="#000"/></svg>
<span style="left:111px;top:140.84px;line-height:16px;font-size:12px;color:#000;transform:scaleX(1.0378);">Orbit</span>
<svg style="left:260px;top:145px;" width="4" height="7" viewBox="0 0 4 7"><path d="M0 0 v7 l4 -3.5 z" fill="#000"/></svg>
<span style="left:111px;top:161.84px;line-height:16px;font-size:12px;color:#000;transform:scaleX(0.9370);">Camera</span>
<svg style="left:260px;top:166px;" width="4" height="7" viewBox="0 0 4 7"><path d="M0 0 v7 l4 -3.5 z" fill="#000"/></svg>
<span style="left:111px;top:182.84px;line-height:16px;font-size:12px;color:#000;transform:scaleX(0.9911);">Walk</span>
<svg style="left:260px;top:187px;" width="4" height="7" viewBox="0 0 4 7"><path d="M0 0 v7 l4 -3.5 z" fill="#000"/></svg>
<span style="left:111px;top:203.84px;line-height:16px;font-size:12px;color:#000;transform:scaleX(0.9697);">Aerial View</span>
<span style="left:241px;top:203.84px;line-height:16px;font-size:12px;color:#000;transform:scaleX(0.7848);">F4</span>
<div style="left:109px;top:225px;width:163px;height:1px;background:#e0e0e0;"></div>
<div style="left:109px;top:226px;width:163px;height:1px;background:#fff;"></div>
<span style="left:111px;top:232.84px;line-height:16px;font-size:12px;color:#000;transform:scaleX(0.9908);">Viewports</span>
<svg style="left:260px;top:237px;" width="4" height="7" viewBox="0 0 4 7"><path d="M0 0 v7 l4 -3.5 z" fill="#000"/></svg>
<span style="left:111px;top:253.84px;line-height:16px;font-size:12px;color:#000;transform:scaleX(0.9754);">Named Views</span>
<svg style="left:260px;top:258px;" width="4" height="7" viewBox="0 0 4 7"><path d="M0 0 v7 l4 -3.5 z" fill="#000"/></svg>
<span style="left:111px;top:274.84px;line-height:16px;font-size:12px;color:#000;transform:scaleX(0.9313);">3D Views</span>
<svg style="left:260px;top:279px;" width="4" height="7" viewBox="0 0 4 7"><path d="M0 0 v7 l4 -3.5 z" fill="#000"/></svg>
<div style="left:109px;top:296px;width:163px;height:1px;background:#e0e0e0;"></div>
<div style="left:109px;top:297px;width:163px;height:1px;background:#fff;"></div>
<div style="left:84px;top:301px;width:187px;height:21px;border:1px solid #b4d6ec;border-radius:3px;background:linear-gradient(180deg,#ebf4fb 0%,#dcecf8 50%,#cfe5f5 100%);"></div>
<span style="left:111px;top:303.84px;line-height:16px;font-size:12px;color:#000;transform:scaleX(0.9655);">Display</span>
<svg style="left:260px;top:308px;" width="4" height="7" viewBox="0 0 4 7"><path d="M0 0 v7 l4 -3.5 z" fill="#000"/></svg>
<span style="left:111px;top:324.84px;line-height:16px;font-size:12px;color:#000;transform:scaleX(0.9935);">Toolbars...</span>
<span style="left:111px;top:345.84px;line-height:16px;font-size:12px;color:#000;transform:scaleX(0.9345);">Visual Styles</span>
<svg style="left:260px;top:350px;" width="4" height="7" viewBox="0 0 4 7"><path d="M0 0 v7 l4 -3.5 z" fill="#000"/></svg>
<span style="left:111px;top:366.84px;line-height:16px;font-size:12px;color:#8a8a8a;transform:scaleX(0.9755);">Lights...</span>
<div style="left:269px;top:299px;width:114px;height:117px;background:#f1f1f1;border:1px solid #979797;box-shadow:4px 4px 3px -1px rgba(0,0,0,.6);"></div>
<div style="left:295px;top:301px;width:1px;height:113px;background:#e2e3e3;"></div>
<div style="left:296px;top:301px;width:1px;height:113px;background:#fff;"></div>
<span style="left:300px;top:303.84px;line-height:16px;font-size:12px;color:#000;transform:scaleX(0.9151);">UCS Icon</span>
<svg style="left:369px;top:308px;" width="4" height="7" viewBox="0 0 4 7"><path d="M0 0 v7 l4 -3.5 z" fill="#000"/></svg>
<div style="left:298px;top:325px;width:83px;height:1px;background:#e0e0e0;"></div>
<div style="left:298px;top:326px;width:83px;height:1px;background:#fff;"></div>
<span style="left:300px;top:332.84px;line-height:16px;font-size:12px;color:#000;transform:scaleX(0.9263);">Grid</span>
<svg style="left:369px;top:337px;" width="4" height="7" viewBox="0 0 4 7"><path d="M0 0 v7 l4 -3.5 z" fill="#000"/></svg>
<span style="left:300px;top:353.84px;line-height:16px;font-size:12px;color:#000;transform:scaleX(0.9718);">Cursor</span>
<svg style="left:369px;top:358px;" width="4" height="7" viewBox="0 0 4 7"><path d="M0 0 v7 l4 -3.5 z" fill="#000"/></svg>
<span style="left:300px;top:374.84px;line-height:16px;font-size:12px;color:#000;transform:scaleX(0.8681);">UCS</span>
<svg style="left:369px;top:379px;" width="4" height="7" viewBox="0 0 4 7"><path d="M0 0 v7 l4 -3.5 z" fill="#000"/></svg>
<div style="left:272px;top:393px;width:108px;height:21px;border:1px solid #b4d6ec;border-radius:3px;background:linear-gradient(180deg,#ebf4fb 0%,#dcecf8 50%,#cfe5f5 100%);"></div>
<span style="left:300px;top:395.84px;line-height:16px;font-size:12px;color:#000;transform:scaleX(0.9167);">UI</span>
<svg style="left:369px;top:400px;" width="4" height="7" viewBox="0 0 4 7"><path d="M0 0 v7 l4 -3.5 z" fill="#000"/></svg>
<div style="left:377px;top:391px;width:135px;height:130px;background:#f1f1f1;border:1px solid #979797;box-shadow:4px 4px 3px -1px rgba(0,0,0,.6);"></div>
<div style="left:403px;top:393px;width:1px;height:126px;background:#e2e3e3;"></div>
<div style="left:404px;top:393px;width:1px;height:126px;background:#fff;"></div>
<span style="left:408px;top:395.84px;line-height:16px;font-size:12px;color:#000;transform:scaleX(1.0073);">Margins</span>
<span style="left:408px;top:416.84px;line-height:16px;font-size:12px;color:#000;transform:scaleX(0.9837);">Background</span>
<span style="left:408px;top:437.84px;line-height:16px;font-size:12px;color:#000;transform:scaleX(0.9308);">Scroll Bars</span>
<div style="left:380px;top:456px;width:129px;height:21px;border:1px solid #b4d6ec;border-radius:3px;background:linear-gradient(180deg,#ebf4fb 0%,#dcecf8 50%,#cfe5f5 100%);"></div>
<span style="left:408px;top:458.84px;line-height:16px;font-size:12px;color:#000;transform:scaleX(0.9225);">Rulers</span>
<span style="left:408px;top:479.84px;line-height:16px;font-size:12px;color:#000;transform:scaleX(0.9281);">Status Bar</span>
<span style="left:408px;top:500.84px;line-height:16px;font-size:12px;color:#000;transform:scaleX(0.9667);">Inspector Bar</span>
<svg style="left:85px;top:48px;" width="17" height="17" viewBox="0 0 17 17"><path d="M1 6 L10 15" fill="none" stroke="#333" stroke-width="0.9" /><path d="M7.5 9.5 L9 6 L14 1 L16.3 3.2 L11.3 8.2 Z" fill="#fff" stroke="#56657f" stroke-width="1" /><path d="M10 6 L15 1.8 M11 7.2 L15.8 2.6" fill="none" stroke="#56657f" stroke-width="0.7" /><path d="M7.3 9.7 L9 6 L11.3 8.2 Z" fill="#3e4a60"/></svg>
<div style="left:84px;top:67px;width:20px;height:20px;border:1px solid #d3dae3;border-radius:2px;background:#e9edf2;"></div>
<svg style="left:85px;top:69px;" width="17" height="17" viewBox="0 0 17 17"><path d="M4.8 13.8 V3.5 M4.3 13.5 H14" fill="none" stroke="#000" stroke-width="1.2" /><path d="M4.8 2 l-2 2.8 h4 z M15.8 13.5 l-2.8 -2 v4 z" fill="#000"/><path d="M6 12.5 L9.5 9" fill="none" stroke="#000" stroke-width="0.9" /></svg>
<svg style="left:85px;top:204px;" width="16" height="16" viewBox="0 0 16 16"><path d="M8 0.8 Q9.8 0.8 9.8 3 V5.5 L15.5 6 Q16 7.5 15.5 8.2 L9.8 8.5 V11 L12 11.5 Q12.3 12.8 12 13.5 L9 13.8 Q8 15.5 7 13.8 L4 13.5 Q3.7 12.8 4 11.5 L6.2 11 V8.5 L0.5 8.2 Q0 7.5 0.5 6 L6.2 5.5 V3 Q6.2 0.8 8 0.8 Z" fill="#f4f4f4" stroke="#222" stroke-width="1" /></svg>
<svg style="left:85px;top:367px;" width="16" height="16" viewBox="0 0 16 16"><rect x="0" y="4" width="16.5" height="8.5" fill="#d6d6d6" stroke="#e0e0e0" stroke-width="1"/><text x="1.2" y="11" font-family="Liberation Sans" font-weight="bold" font-size="7.5" fill="#ececec" textLength="14" lengthAdjust="spacingAndGlyphs">PRO</text></svg>
<div style="left:381px;top:393px;width:20px;height:20px;border:1px solid #cfd9e4;border-radius:2px;background:#e6ebf2;"></div>
<svg style="left:385px;top:398px;" width="10" height="12" viewBox="0 0 10 12"><path d="M0.5 0.5 h8.5 v10.5 h-8.5 z" fill="none" stroke="#d01818" stroke-width="1" stroke-dasharray="1.5 1"/></svg>
<div style="left:381px;top:414px;width:20px;height:20px;border:1px solid #cfd9e4;border-radius:2px;background:#e6ebf2;"></div>
<div style="left:382px;top:416px;width:17px;height:17px;background:#2ff0f8;"></div>
<div style="left:388px;top:421px;width:7px;height:9px;background:#9a9a9a;"></div>
<div style="left:387px;top:420px;width:7px;height:9px;background:#fff;"></div>
<div style="left:381px;top:435px;width:20px;height:20px;border:1px solid #cfd9e4;border-radius:2px;background:#e6ebf2;"></div>
<svg style="left:382px;top:438px;" width="17" height="17" viewBox="0 0 17 17"><rect x="0" y="0" width="12" height="12" fill="#7d7d7d"/><rect x="12" y="0" width="4" height="16" fill="#fff"/><rect x="0" y="12" width="16" height="4" fill="#fff"/><rect x="12.5" y="1.0" width="3" height="1.8" fill="#111"/><rect x="12.5" y="4.2" width="3" height="1.8" fill="#111"/><rect x="12.5" y="7.4" width="3" height="1.8" fill="#111"/><rect x="12.5" y="10.600000000000001" width="3" height="1.8" fill="#111"/><rect x="0.5" y="12.8" width="1.8" height="3" fill="#111"/><rect x="3.7" y="12.8" width="1.8" height="3" fill="#111"/><rect x="6.9" y="12.8" width="1.8" height="3" fill="#111"/><rect x="10.100000000000001" y="12.8" width="1.8" height="3" fill="#111"/><rect x="13.3" y="12.8" width="1.8" height="3" fill="#111"/></svg>
<svg style="left:382px;top:459px;" width="16" height="15" viewBox="0 0 16 15"><path d="M0.7 0.7 H15 V5.5 H6 V13.5 H0.7 Z" fill="#fff" stroke="#111" stroke-width="1.4" /><path d="M3 1 v2 M5.5 1 v2.5 M8 1 v2 M10.5 1 v2.5 M13 1 v2 M1 6 h2 M1 8.5 h2.5 M1 11 h2" fill="none" stroke="#111" stroke-width="0.8" /></svg>
<div style="left:381px;top:477px;width:20px;height:20px;border:1px solid #cfd9e4;border-radius:2px;background:#e6ebf2;"></div>
<svg style="left:382px;top:490px;" width="17" height="6" viewBox="0 0 17 6"><path d="M0.6 0.6 H16 V4.6 H0.6 Z" fill="#fff" stroke="#111" stroke-width="1.2" /><path d="M3 2.6 h2.5 M7 2.6 h2.5 M11 2.6 h2.5" fill="none" stroke="#111" stroke-width="1" /></svg>
<svg style="left:382px;top:505px;" width="17" height="7" viewBox="0 0 17 7"><path d="M0.5 0.5 h2 v2 h-2 z M0.5 4 h2 v2 h-2 z" fill="#ddd" stroke="#555" stroke-width="0.8" /><path d="M5 0.6 H16 V5.6 H5 Z" fill="#fff" stroke="#333" stroke-width="1" /><path d="M8 3.2 h1.5 M10.5 3.2 h1.5" fill="none" stroke="#888" stroke-width="0.8" /></svg>
</body></html>
